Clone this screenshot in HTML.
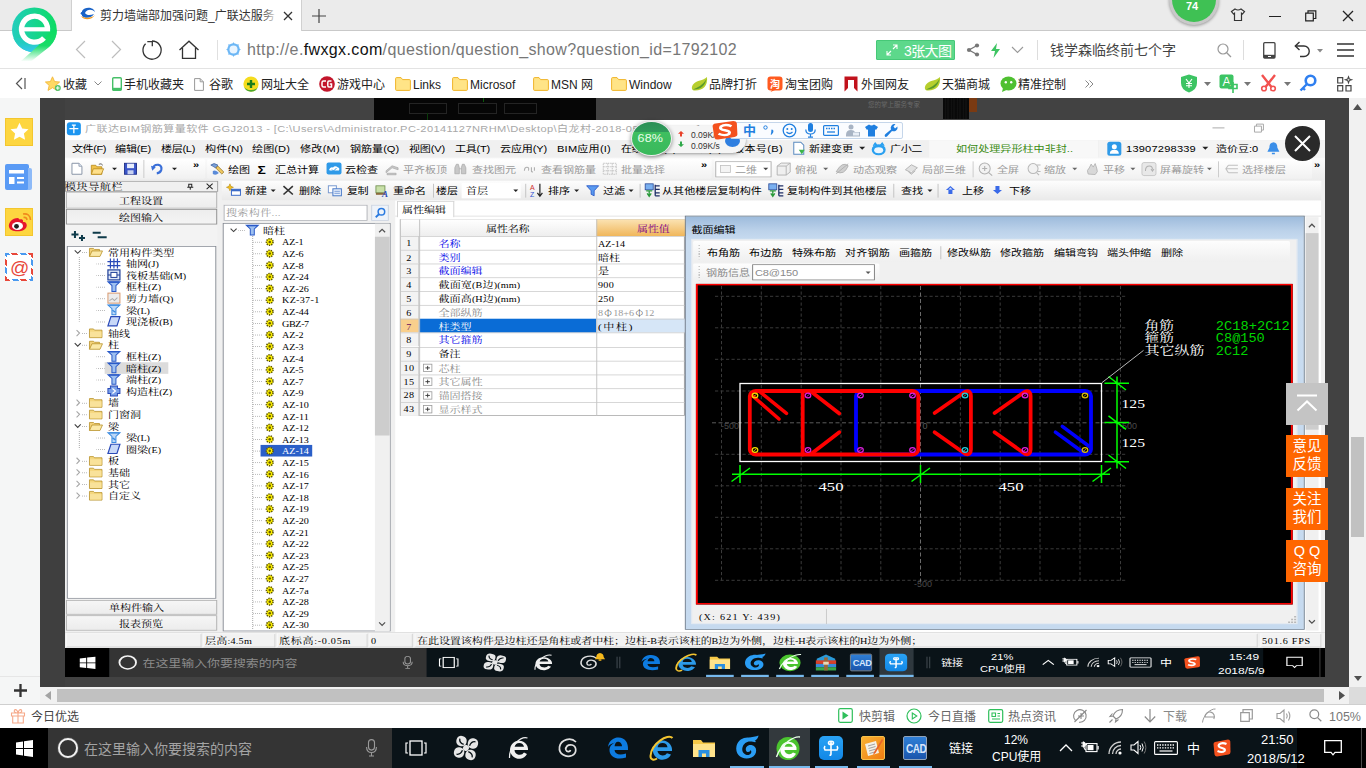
<!DOCTYPE html>
<html lang="zh-CN">
<head>
<meta charset="utf-8">
<title>剪力墙端部加强问题_广联达服务</title>
<style>
*{box-sizing:border-box;margin:0;padding:0}
html,body{width:1366px;height:768px;overflow:hidden;background:#fff}
body{position:relative;font-family:"Liberation Sans","Noto Sans CJK SC",sans-serif;font-size:12px;color:#222}
.a{position:absolute}
.t{position:absolute;white-space:nowrap;line-height:1;margin-top:1px}
svg{position:absolute;overflow:visible}
/* browser chrome */
#tabbar{left:0;top:0;width:1366px;height:31px;background:#ebebeb;border-bottom:1px solid #c9c9c9}
#tab{left:71px;top:0;width:231px;height:31px;background:#fff;border-left:1px solid #d0d0d0;border-right:1px solid #d0d0d0}
#nav{left:0;top:31px;width:1366px;height:38px;background:#fff;border-bottom:1px solid #e3e3e3}
#bm{left:0;top:69px;width:1366px;height:29px;background:#fff}
.bmt{font-size:13px;color:#222;top:77.500px}
/* page */
#side{left:0;top:98px;width:40px;height:606px;background:#f5f6f6}
#ov{left:40px;top:98px;width:1309px;height:589px;background:#424242}
#vsb{left:1349px;top:98px;width:17px;height:589px;background:#f1f1f1}
#hsb{left:40px;top:687px;width:1326px;height:17px;background:#f1f1f1}
#status{left:0;top:704px;width:1366px;height:24px;background:#fff;border-top:1px solid #cfcfcf}
#task{left:0;top:728px;width:1366px;height:40px;background:#0a1318}
#shot{left:65px;top:120px;width:1260px;height:557px;background:#f0f0f0;overflow:hidden;font-family:"Liberation Sans","Noto Sans CJK SC",sans-serif}
</style>
</head>
<body>
<!-- TABBAR -->
<div class="a" id="tabbar"></div>
<div class="a" id="tab"></div>
<div class="a" id="nav"></div>
<div class="a" id="bm"></div>
<!-- PAGE -->
<div class="a" id="side"></div>
<div class="a" id="ov"></div>
<div class="a" id="vsb"></div>
<div class="a" id="hsb"></div>
<div class="a" id="shot">
<div class="a" id="inner" style="left:0;top:0;width:1366px;height:768px;transform-origin:0 0;transform:scale(0.92240,0.72526);background:#f0f0f0">
<div class="a" style="left:0.0px;top:0.0px;width:1366.0px;height:27.6px;background:#fff"></div>
<svg style="left:2.2px;top:2.8px" width="15.2" height="17.9" viewBox="0 0 14 13" preserveAspectRatio="none"><rect x="0" y="0" width="14" height="13" rx="3" fill="#1c95f0"/><path d="M7 2.500 V11 M2.500 6.500 H11.500 M5 3 H9" stroke="#fff" stroke-width="1.300" fill="none"/></svg>
<div class="t" id="f1" style="left:21.7px;top:5.3px;font-size:12px;color:#a8a8a8;font-family:'Liberation Sans','Noto Sans CJK SC',sans-serif;letter-spacing:0.43px;">广联达BIM钢筋算量软件 GGJ2013 - [C:\Users\Administrator.PC-20141127NRHM\Desktop\白龙村-2018-05-09.GGJ12]</div>
<svg style="left:1243.5px;top:9.7px" width="13.0" height="1.7" viewBox="0 0 12 1.2" preserveAspectRatio="none"><rect width="12" height="1.200" fill="#bbb"/></svg>
<svg style="left:1289.0px;top:4.8px" width="10.8" height="11.0" viewBox="0 0 10 8" preserveAspectRatio="none"><path d="M.5 2.500 H7.500 V8.500 H.5Z M2.500 2.500 V.5 H9.500 V6.500 H7.500" fill="none" stroke="#aaa" stroke-width="1"/></svg>
<div class="a" style="left:0.0px;top:27.6px;width:1366.0px;height:24.8px;background:#f0f0f0"></div>
<div class="t" id="f2" style="left:7.6px;top:33.3px;font-size:12px;color:#000;font-family:'Liberation Sans','Noto Sans CJK SC',sans-serif;letter-spacing:-0.49px;">文件(F)</div>
<div class="t" id="f3" style="left:54.2px;top:33.3px;font-size:12px;color:#000;font-family:'Liberation Sans','Noto Sans CJK SC',sans-serif;letter-spacing:-0.19px;">编辑(E)</div>
<div class="t" id="f4" style="left:104.1px;top:33.3px;font-size:12px;color:#000;font-family:'Liberation Sans','Noto Sans CJK SC',sans-serif;letter-spacing:-0.36px;">楼层(L)</div>
<div class="t" id="f5" style="left:151.8px;top:33.3px;font-size:12px;color:#000;font-family:'Liberation Sans','Noto Sans CJK SC',sans-serif;letter-spacing:0.11px;">构件(N)</div>
<div class="t" id="f6" style="left:202.7px;top:33.3px;font-size:12px;color:#000;font-family:'Liberation Sans','Noto Sans CJK SC',sans-serif;letter-spacing:0.11px;">绘图(D)</div>
<div class="t" id="f7" style="left:254.8px;top:33.3px;font-size:12px;color:#000;font-family:'Liberation Sans','Noto Sans CJK SC',sans-serif;letter-spacing:0.27px;">修改(M)</div>
<div class="t" id="f8" style="left:309.0px;top:33.3px;font-size:12px;color:#000;font-family:'Liberation Sans','Noto Sans CJK SC',sans-serif;letter-spacing:-0.03px;">钢筋量(Q)</div>
<div class="t" id="f9" style="left:372.9px;top:33.3px;font-size:12px;color:#000;font-family:'Liberation Sans','Noto Sans CJK SC',sans-serif;letter-spacing:-0.19px;">视图(V)</div>
<div class="t" id="f10" style="left:422.8px;top:33.3px;font-size:12px;color:#000;font-family:'Liberation Sans','Noto Sans CJK SC',sans-serif;letter-spacing:-0.28px;">工具(T)</div>
<div class="t" id="f11" style="left:471.6px;top:33.3px;font-size:12px;color:#000;font-family:'Liberation Sans','Noto Sans CJK SC',sans-serif;letter-spacing:-0.17px;">云应用(Y)</div>
<div class="t" id="f12" style="left:533.4px;top:33.3px;font-size:12px;color:#000;font-family:'Liberation Sans','Noto Sans CJK SC',sans-serif;letter-spacing:0.23px;">BIM应用(I)</div>
<div class="t" id="f13" style="left:602.8px;top:33.3px;font-size:12px;color:#000;font-family:'Liberation Sans','Noto Sans CJK SC',sans-serif;letter-spacing:-0.62px;">在线服务(S)</div>
<div class="t" id="f14" style="left:673.2px;top:33.3px;font-size:12px;color:#000;font-family:'Liberation Sans','Noto Sans CJK SC',sans-serif;letter-spacing:-0.33px;">帮助(H)</div>
<div class="t" id="f15" style="left:724.2px;top:33.3px;font-size:12px;color:#000;font-family:'Liberation Sans','Noto Sans CJK SC',sans-serif;letter-spacing:0.37px;">版本号(B)</div>
<svg style="left:789.2px;top:30.3px" width="14.1" height="17.9" viewBox="0 0 13 13" preserveAspectRatio="none"><path d="M1 .5 H8 L11 3.500 V12.500 H1Z" fill="#fff" stroke="#5a8ac0" stroke-width="1"/><path d="M6 8 L12 8 L9 12.500Z" fill="#3bb54a"/></svg>
<div class="t" id="f16" style="left:806.6px;top:33.3px;font-size:12px;color:#000;font-family:'Liberation Sans','Noto Sans CJK SC',sans-serif;letter-spacing:-0.08px;">新建变更</div>
<svg style="left:860.8px;top:37.2px" width="6.5" height="4.1" viewBox="0 0 6 3" preserveAspectRatio="none"><path d="M0 0 H6 L3 3Z" fill="#222"/></svg>
<svg style="left:873.8px;top:29.6px" width="16.3" height="19.3" viewBox="0 0 15 14" preserveAspectRatio="none"><ellipse cx="7.500" cy="8" rx="7" ry="5.500" fill="#2aa0f0"/><path d="M2 4 L4 1 L6 3.500 M9 3.500 L11 1 L13 4" fill="#2aa0f0" stroke="#2aa0f0"/><ellipse cx="7.500" cy="8.500" rx="4.500" ry="3" fill="#eaf6ff"/></svg>
<div class="t" id="f17" style="left:894.4px;top:33.3px;font-size:12px;color:#000;font-family:'Liberation Sans','Noto Sans CJK SC',sans-serif;letter-spacing:-0.44px;">广小二</div>
<div class="a" style="left:936.7px;top:27.6px;width:183.2px;height:24.8px;background:#f8f8f8"></div>
<div class="t" id="f18" style="left:966.0px;top:33.3px;font-size:12px;color:#3a8a12;font-family:'Liberation Sans','Noto Sans CJK SC',sans-serif;letter-spacing:0.01px;">如何处理异形柱中非封..</div>
<div class="a" style="left:1121.0px;top:27.6px;width:245.0px;height:24.8px;background:#f4f4f4"></div>
<svg style="left:1129.7px;top:29.6px" width="15.2" height="19.3" viewBox="0 0 14 14" preserveAspectRatio="none"><rect width="14" height="14" rx="2.500" fill="#2f9ae8"/><circle cx="7" cy="5" r="2.500" fill="#fff"/><path d="M2.500 12 Q2.500 8 7 8 Q11.500 8 11.500 12Z" fill="#fff"/></svg>
<div class="t" id="f19" style="left:1150.3px;top:33.3px;font-size:12px;color:#000;font-family:'Liberation Sans','Noto Sans CJK SC',sans-serif;letter-spacing:0.22px;">13907298339</div>
<svg style="left:1232.7px;top:37.2px" width="6.5" height="4.1" viewBox="0 0 6 3" preserveAspectRatio="none"><path d="M0 0 H6 L3 3Z" fill="#222"/></svg>
<div class="t" id="f20" style="left:1247.8px;top:33.3px;font-size:12px;color:#000;font-family:'Liberation Sans','Noto Sans CJK SC',sans-serif;letter-spacing:-0.10px;">造价豆:0</div>
<svg style="left:1303.1px;top:30.3px" width="14.1" height="17.9" viewBox="0 0 13 13" preserveAspectRatio="none"><path d="M6.500 .5 Q10.500 1 10.500 6 L12.500 10 H.5 L2.500 6 Q2.500 1 6.500 .5Z M5 11 H8 V12.500 H5Z" fill="#3a8ee8"/></svg>
<div class="a" style="left:0.0px;top:52.4px;width:1366.0px;height:30.3px;background:linear-gradient(180deg,#fbfbfb,#ececec)"></div>
<div class="a" style="left:1.1px;top:53.8px;width:150.7px;height:27.6px;background:linear-gradient(180deg,#fff,#f1f1f1);border-radius:2px"></div>
<div class="a" style="left:153.9px;top:53.8px;width:547.5px;height:27.6px;background:linear-gradient(180deg,#fff,#f1f1f1);border-radius:2px"></div>
<div class="a" style="left:703.6px;top:53.8px;width:648.3px;height:27.6px;background:linear-gradient(180deg,#fff,#f1f1f1);border-radius:2px"></div>
<svg style="left:6.5px;top:59.3px" width="11.9" height="16.5" viewBox="0 0 11 12" preserveAspectRatio="none"><path d="M.5 .5 H7.500 L10.500 3.500 V11.500 H.5Z" fill="#fff" stroke="#8a96a8" stroke-width="1"/><path d="M7.500 .5 V3.500 H10.500" fill="#dde6f2" stroke="#8a96a8" stroke-width=".8"/></svg>
<svg style="left:28.2px;top:59.3px" width="14.1" height="16.5" viewBox="0 0 13 12" preserveAspectRatio="none"><path d="M.5 2.500 H5 L6 4 H11 V11.500 H.5Z" fill="#f0c24a" stroke="#b88a1c" stroke-width=".8"/><path d="M2.500 6 H12.800 L10.500 11.500 H.5Z" fill="#ffe08a" stroke="#b88a1c" stroke-width=".8"/><path d="M8 1.500 Q10.500 0 12 2.500" fill="none" stroke="#444" stroke-width=".8"/></svg>
<svg style="left:51.0px;top:66.2px" width="5.4" height="3.4" viewBox="0 0 5 2.5" preserveAspectRatio="none"><path d="M0 0 H5 L2.500 2.500Z" fill="#222"/></svg>
<svg style="left:64.0px;top:59.3px" width="14.1" height="16.5" viewBox="0 0 13 12" preserveAspectRatio="none"><rect x=".5" y=".5" width="12" height="11" fill="#3a55c8" stroke="#1f2f88" stroke-width=".9"/><rect x="3" y=".9" width="7" height="4.500" fill="#e8eefc"/><rect x="3.500" y="7.500" width="6" height="4" fill="#c8d2f0"/></svg>
<div class="a" style="left:84.6px;top:55.2px;width:1.1px;height:24.8px;background:#c9c9c9"></div>
<svg style="left:93.2px;top:59.3px" width="13.0" height="15.2" viewBox="0 0 12 11" preserveAspectRatio="none"><path d="M2 6 Q3 1.500 7.500 2 Q11.500 3 10.500 7 Q9.500 10 6 10.500" fill="none" stroke="#3a6fd8" stroke-width="2.200"/><path d="M.2 3 L5 4.500 L1.500 8Z" fill="#3a6fd8"/></svg>
<svg style="left:116.0px;top:66.2px" width="5.4" height="3.4" viewBox="0 0 5 2.5" preserveAspectRatio="none"><path d="M0 0 H5 L2.500 2.500Z" fill="#222"/></svg>
<div class="t" id="f21" style="left:138.8px;top:55.4px;font-size:12px;color:#000;font-family:'Liberation Sans','Noto Sans CJK SC',sans-serif;font-weight:bold;">»</div>
<svg style="left:157.2px;top:57.9px" width="16.3" height="19.3" viewBox="0 0 15 14" preserveAspectRatio="none"><path d="M1 3 Q4 0 8 3 L6 6 Q3 4 1 3Z" fill="#7aa0d8" stroke="#3a5a98" stroke-width=".7"/><path d="M6 6 L12 12 L14 10 L8 4Z" fill="#f0c860" stroke="#8a6a1c" stroke-width=".7"/><path d="M3 9 Q6 7 9 11 Q6 14 3 12Z" fill="#5a8ad8"/></svg>
<div class="t" id="f22" style="left:176.7px;top:61.6px;font-size:12px;color:#000;font-family:'Liberation Sans','Noto Sans CJK SC',sans-serif;letter-spacing:-0.08px;">绘图</div>
<div class="t" id="f23" style="left:208.7px;top:59.6px;font-size:15px;color:#000;font-family:'Liberation Sans','Noto Sans CJK SC',sans-serif;font-weight:bold;">Σ</div>
<div class="t" id="f24" style="left:227.7px;top:61.6px;font-size:12px;color:#000;font-family:'Liberation Sans','Noto Sans CJK SC',sans-serif;letter-spacing:-0.08px;">汇总计算</div>
<svg style="left:283.0px;top:57.9px" width="17.3" height="17.9" viewBox="0 0 16 13" preserveAspectRatio="none"><rect x=".5" y=".5" width="15" height="12" rx="2" fill="#2f9ae8"/><path d="M3 8 Q4 4.500 7 5.500 Q9 3 12 5.500 Q14 6 13 8.500 H4Z" fill="#fff"/><path d="M6 7.500 L7.500 9 L10.500 6" fill="none" stroke="#2f9ae8" stroke-width="1"/></svg>
<div class="t" id="f25" style="left:303.6px;top:61.6px;font-size:12px;color:#000;font-family:'Liberation Sans','Noto Sans CJK SC',sans-serif;letter-spacing:-0.08px;">云检查</div>
<svg style="left:346.9px;top:59.3px" width="15.2" height="16.5" viewBox="0 0 14 12" preserveAspectRatio="none"><path d="M1 8 L7 3 L13 5 V7 L7 5 L1 10Z M2 10.500 H11 V12 H2Z" fill="#c8c8c8" stroke="#a8a8a8" stroke-width=".7"/></svg>
<div class="t" id="f26" style="left:366.4px;top:61.6px;font-size:12px;color:#9a9a9a;font-family:'Liberation Sans','Noto Sans CJK SC',sans-serif;letter-spacing:-0.08px;">平齐板顶</div>
<svg style="left:420.6px;top:59.3px" width="15.2" height="16.5" viewBox="0 0 14 12" preserveAspectRatio="none"><path d="M1.500 11 V5 L3 1.500 H5 L6 5 V11Z M8 11 V5 L9 1.500 H11 L12.500 5 V11Z M6 6 H8" fill="#c8c8c8" stroke="#a8a8a8" stroke-width=".7"/></svg>
<div class="t" id="f27" style="left:441.2px;top:61.6px;font-size:12px;color:#9a9a9a;font-family:'Liberation Sans','Noto Sans CJK SC',sans-serif;letter-spacing:-0.08px;">查找图元</div>
<svg style="left:496.5px;top:63.4px" width="14.1" height="9.7" viewBox="0 0 13 7" preserveAspectRatio="none"><path d="M1 5 Q1 1.500 3.500 1.500 Q6 1.500 5 5 M8 1.500 V5.500 Q8 6.500 9.500 6 M11 1.500 V5" fill="none" stroke="#b0b0b0" stroke-width="1.100"/></svg>
<div class="t" id="f28" style="left:516.0px;top:61.6px;font-size:12px;color:#9a9a9a;font-family:'Liberation Sans','Noto Sans CJK SC',sans-serif;letter-spacing:-0.08px;">查看钢筋量</div>
<svg style="left:583.3px;top:59.3px" width="15.2" height="16.5" viewBox="0 0 14 12" preserveAspectRatio="none"><path d="M.5 .5 H13.500 V11.500 H.5Z M.5 4 H13.500 M.5 8 H13.500 M5 .5 V11.500 M9.500 .5 V11.500" fill="none" stroke="#b8b8b8" stroke-width=".8" stroke-dasharray="1.500 .8"/></svg>
<div class="t" id="f29" style="left:602.8px;top:61.6px;font-size:12px;color:#9a9a9a;font-family:'Liberation Sans','Noto Sans CJK SC',sans-serif;letter-spacing:-0.08px;">批量选择</div>
<div class="t" id="f30" style="left:689.5px;top:55.4px;font-size:12px;color:#000;font-family:'Liberation Sans','Noto Sans CJK SC',sans-serif;font-weight:bold;">»</div>
<div class="a" style="left:704.7px;top:56.5px;width:61.8px;height:22.1px;background:#fff;border:1px solid #ababab"></div>
<svg style="left:710.1px;top:62.0px" width="11.9" height="11.0" viewBox="0 0 11 8" preserveAspectRatio="none"><rect x=".5" y=".5" width="10" height="7" fill="#f4f4f4" stroke="#c0c0c0" stroke-width=".8"/></svg>
<div class="t" id="f31" style="left:726.4px;top:61.6px;font-size:12px;color:#9a9a9a;font-family:'Liberation Sans','Noto Sans CJK SC',sans-serif;letter-spacing:-0.08px;">二维</div>
<svg style="left:756.7px;top:66.2px" width="5.4" height="3.4" viewBox="0 0 5 2.5" preserveAspectRatio="none"><path d="M0 0 H5 L2.500 2.500Z" fill="#444"/></svg>
<svg style="left:770.8px;top:57.9px" width="16.3" height="19.3" viewBox="0 0 15 14" preserveAspectRatio="none"><path d="M1 4 L5 1 H14 V10 L10 13 H1Z M1 4 H10 V13 M10 4 L14 1" fill="#efefef" stroke="#b0b0b0" stroke-width=".9"/></svg>
<div class="t" id="f32" style="left:791.4px;top:61.6px;font-size:12px;color:#9a9a9a;font-family:'Liberation Sans','Noto Sans CJK SC',sans-serif;letter-spacing:-0.08px;">俯视</div>
<svg style="left:821.8px;top:66.2px" width="5.4" height="3.4" viewBox="0 0 5 2.5" preserveAspectRatio="none"><path d="M0 0 H5 L2.500 2.500Z" fill="#666"/></svg>
<svg style="left:834.8px;top:59.3px" width="15.2" height="16.5" viewBox="0 0 14 12" preserveAspectRatio="none"><path d="M1 9 Q7 -2 13 3 Q9 13 1 9Z M1 11 L13 1" fill="#d0d0d0" stroke="#aaa" stroke-width=".8"/></svg>
<div class="t" id="f33" style="left:854.3px;top:61.6px;font-size:12px;color:#9a9a9a;font-family:'Liberation Sans','Noto Sans CJK SC',sans-serif;letter-spacing:-0.08px;">动态观察</div>
<svg style="left:909.6px;top:59.3px" width="15.2" height="16.5" viewBox="0 0 14 12" preserveAspectRatio="none"><path d="M1 7 L7 2 L13 5 L7 10Z M4 9 L7 11.500 L11 8" fill="#e2e2e2" stroke="#aaa" stroke-width=".8"/></svg>
<div class="t" id="f34" style="left:929.1px;top:61.6px;font-size:12px;color:#9a9a9a;font-family:'Liberation Sans','Noto Sans CJK SC',sans-serif;letter-spacing:-0.08px;">局部三维</div>
<div class="a" style="left:984.4px;top:56.5px;width:1.1px;height:22.1px;background:#c9c9c9"></div>
<svg style="left:989.8px;top:57.9px" width="16.3" height="19.3" viewBox="0 0 15 14" preserveAspectRatio="none"><circle cx="6.500" cy="6.500" r="5.500" fill="#f2f2f2" stroke="#b0b0b0" stroke-width="1"/><path d="M4 6.500 H9 M6.500 4 V9 M10.500 10.500 L14 13.500" stroke="#b0b0b0" stroke-width="1.100"/></svg>
<div class="t" id="f35" style="left:1010.4px;top:61.6px;font-size:12px;color:#9a9a9a;font-family:'Liberation Sans','Noto Sans CJK SC',sans-serif;letter-spacing:-0.08px;">全屏</div>
<svg style="left:1042.9px;top:57.9px" width="15.2" height="19.3" viewBox="0 0 14 14" preserveAspectRatio="none"><circle cx="6" cy="6.500" r="5" fill="#f2f2f2" stroke="#b8b8b8" stroke-width="1"/><path d="M10 3 H13.500 M10.500 9.500 H13.500 M9.500 10.500 L12 13" stroke="#b8b8b8" stroke-width="1.100"/></svg>
<div class="t" id="f36" style="left:1061.4px;top:61.6px;font-size:12px;color:#9a9a9a;font-family:'Liberation Sans','Noto Sans CJK SC',sans-serif;letter-spacing:-0.08px;">缩放</div>
<svg style="left:1091.7px;top:66.2px" width="5.4" height="3.4" viewBox="0 0 5 2.5" preserveAspectRatio="none"><path d="M0 0 H5 L2.500 2.500Z" fill="#666"/></svg>
<svg style="left:1105.8px;top:57.9px" width="15.2" height="19.3" viewBox="0 0 14 14" preserveAspectRatio="none"><path d="M3 12 Q1 8 4 6 L6 2 L8 5 L10 1.500 L11.500 6 Q13.500 10 10 12.500Z" fill="#d8d8d8" stroke="#b0b0b0" stroke-width=".8"/></svg>
<div class="t" id="f37" style="left:1125.3px;top:61.6px;font-size:12px;color:#9a9a9a;font-family:'Liberation Sans','Noto Sans CJK SC',sans-serif;letter-spacing:-0.08px;">平移</div>
<svg style="left:1154.6px;top:66.2px" width="5.4" height="3.4" viewBox="0 0 5 2.5" preserveAspectRatio="none"><path d="M0 0 H5 L2.500 2.500Z" fill="#666"/></svg>
<svg style="left:1166.5px;top:57.9px" width="16.3" height="19.3" viewBox="0 0 15 14" preserveAspectRatio="none"><rect x=".5" y=".5" width="14" height="13" rx="2" fill="#e8e8e8" stroke="#c0c0c0" stroke-width=".8"/><path d="M4 9 Q4 4 8 4 Q11 4 11 7.500 M9.500 7 L11 9 L12.500 7" fill="none" stroke="#b0b0b0" stroke-width="1"/></svg>
<div class="t" id="f38" style="left:1187.1px;top:61.6px;font-size:12px;color:#9a9a9a;font-family:'Liberation Sans','Noto Sans CJK SC',sans-serif;letter-spacing:-0.08px;">屏幕旋转</div>
<svg style="left:1238.1px;top:66.2px" width="5.4" height="3.4" viewBox="0 0 5 2.5" preserveAspectRatio="none"><path d="M0 0 H5 L2.500 2.500Z" fill="#666"/></svg>
<div class="a" style="left:1250.0px;top:56.5px;width:1.1px;height:22.1px;background:#c9c9c9"></div>
<svg style="left:1257.6px;top:60.7px" width="14.1" height="13.8" viewBox="0 0 13 10" preserveAspectRatio="none"><path d="M3 1 H12.500 M1 4.500 H12.500 M3 8.500 H12.500 M3 1 L.5 4.500 L3 8.500" fill="none" stroke="#c0c0c0" stroke-width="1.100"/></svg>
<div class="t" id="f39" style="left:1276.0px;top:61.6px;font-size:12px;color:#9a9a9a;font-family:'Liberation Sans','Noto Sans CJK SC',sans-serif;letter-spacing:-0.08px;">选择楼层</div>
<div class="t" id="f40" style="left:1354.1px;top:55.4px;font-size:12px;color:#000;font-family:'Liberation Sans','Noto Sans CJK SC',sans-serif;font-weight:bold;">»</div>
<div class="a" style="left:0.0px;top:82.7px;width:1366.0px;height:28.3px;background:#f0f0f0"></div>
<div class="a" style="left:0.0px;top:84.1px;width:165.9px;height:14.5px;background:#f0f0f0;border:1px solid #9a9a9a"></div>
<div class="t" id="f41" style="left:0.0px;top:84.7px;font-size:12px;color:#000;font-family:'Liberation Serif','Noto Serif CJK SC',serif;letter-spacing:0.57px;">模块导航栏</div>
<svg style="left:132.3px;top:87.6px" width="7.6" height="8.3" viewBox="0 0 7 6" preserveAspectRatio="none"><path d="M2 0 V3.500 M5 0 V3.500 M2 .5 H5 M.5 3.500 H6.500 M3.500 3.500 V6" stroke="#222" stroke-width="1" fill="none"/></svg>
<svg style="left:152.9px;top:86.9px" width="7.6" height="9.0" viewBox="0 0 7 6.5" preserveAspectRatio="none"><path d="M.5 .5 L6.500 6 M6.500 .5 L.5 6" stroke="#222" stroke-width="1" fill="none"/></svg>
<div class="a" style="left:1.1px;top:99.3px;width:163.7px;height:22.8px;background:linear-gradient(180deg,#f6f6f6,#ececec);border:1px solid #adadad"></div>
<div class="t" id="f42" style="left:58.5px;top:105.0px;font-size:12px;color:#000;font-family:'Liberation Serif','Noto Serif CJK SC',serif;letter-spacing:-0.08px;">工程设置</div>
<div class="a" style="left:1.1px;top:122.7px;width:163.7px;height:21.4px;background:linear-gradient(180deg,#ededed,#f4f4f4);border:1px solid #8a8a8a"></div>
<div class="t" id="f43" style="left:58.5px;top:127.7px;font-size:12px;color:#000;font-family:'Liberation Serif','Noto Serif CJK SC',serif;letter-spacing:-0.08px;">绘图输入</div>
<div class="a" style="left:1.1px;top:144.8px;width:163.7px;height:29.0px;background:#f3f3f3"></div>
<svg style="left:6.5px;top:153.0px" width="16.3" height="13.8" viewBox="0 0 15 10" preserveAspectRatio="none"><path d="M3.500 0 V7 M0 3.500 H7 M10.500 4 V10 M7.500 7 H13.500" stroke="#0f3b4a" stroke-width="2" fill="none"/></svg>
<svg style="left:30.4px;top:154.4px" width="15.2" height="9.7" viewBox="0 0 14 7" preserveAspectRatio="none"><path d="M0 1 H8 M5 5.500 H14" stroke="#0f3b4a" stroke-width="2" fill="none"/></svg>
<div class="a" style="left:2.2px;top:173.7px;width:161.5px;height:486.7px;background:#fff;border:1px solid #828790"></div>
<div class="a" style="left:14.6px;top:188.9px;width:1.1px;height:88.9px;width:1px;background:repeating-linear-gradient(180deg,#a0a0a0 0 1px,transparent 1px 2.760px)"></div>
<div class="a" style="left:14.6px;top:317.1px;width:1.1px;height:56.5px;width:1px;background:repeating-linear-gradient(180deg,#a0a0a0 0 1px,transparent 1px 2.760px)"></div>
<div class="a" style="left:14.6px;top:428.8px;width:1.1px;height:24.8px;width:1px;background:repeating-linear-gradient(180deg,#a0a0a0 0 1px,transparent 1px 2.760px)"></div>
<svg style="left:10.3px;top:179.2px" width="7.6" height="5.5" viewBox="0 0 7 4" preserveAspectRatio="none"><path d="M.5 .5 L3.500 3.500 L6.500 .5" fill="none" stroke="#404040" stroke-width="1.100"/></svg>
<div class="a" style="left:18.4px;top:182.0px;width:6.5px;height:0.7px;height:1px;background:repeating-linear-gradient(90deg,#a0a0a0 0 1px,transparent 1px 2.170px)"></div>
<svg style="left:26.0px;top:175.1px" width="15.2" height="13.8" viewBox="0 0 14 10" preserveAspectRatio="none"><path d="M.5 9.500 V1.500 H4.500 L5.500 2.500 H10.500 V4" fill="#f3d27a" stroke="#b8922a" stroke-width=".8"/><path d="M.5 9.500 L3 4 H13.500 L11 9.500Z" fill="#fbe9a8" stroke="#b8922a" stroke-width=".8"/></svg>
<div class="t" id="f44" style="left:46.6px;top:176.0px;font-size:12px;color:#000;font-family:'Liberation Serif','Noto Serif CJK SC',serif;">常用构件类型</div>
<div class="a" style="left:34.1px;top:198.0px;width:10.3px;height:0.7px;height:1px;background:repeating-linear-gradient(90deg,#a0a0a0 0 1px,transparent 1px 2.170px)"></div>
<svg style="left:46.1px;top:191.1px" width="14.1" height="13.8" viewBox="0 0 13 10" preserveAspectRatio="none"><path d="M0 3 H13 M0 7 H13 M3 0 V10 M6.500 0 V10 M10 0 V10" stroke="#2a4ab8" stroke-width="1.200" fill="none"/></svg>
<div class="t" id="f45" style="left:66.1px;top:192.0px;font-size:12px;color:#000;font-family:'Liberation Serif','Noto Serif CJK SC',serif;">轴网<span style="font-size:11px">(J)</span></div>
<div class="a" style="left:34.1px;top:214.0px;width:10.3px;height:0.7px;height:1px;background:repeating-linear-gradient(90deg,#a0a0a0 0 1px,transparent 1px 2.170px)"></div>
<svg style="left:46.1px;top:206.4px" width="14.1" height="15.2" viewBox="0 0 13 11" preserveAspectRatio="none"><rect x=".5" y=".5" width="12" height="10" fill="#dfe8f8" stroke="#1f3f98" stroke-width="1.200"/><rect x="3.500" y="3" width="6" height="5" fill="#fff" stroke="#1f3f98" stroke-width="1"/><path d="M.5 5.500 H3.500 M9.500 5.500 H12.500" stroke="#1f3f98"/></svg>
<div class="t" id="f46" style="left:66.1px;top:208.0px;font-size:12px;color:#000;font-family:'Liberation Serif','Noto Serif CJK SC',serif;">筏板基础<span style="font-size:11px">(M)</span></div>
<div class="a" style="left:34.1px;top:230.0px;width:10.3px;height:0.7px;height:1px;background:repeating-linear-gradient(90deg,#a0a0a0 0 1px,transparent 1px 2.170px)"></div>
<svg style="left:46.1px;top:222.4px" width="14.1" height="15.2" viewBox="0 0 13 11" preserveAspectRatio="none"><path d="M.5 .8 H12.500 L8.500 4.500 V10.500 H4.500 V4.500Z" fill="#9ec0f0" stroke="#2a5ac8" stroke-width="1"/><path d="M1.500 1.200 H11.500" stroke="#2a5ac8" stroke-width="1.400"/></svg>
<div class="t" id="f47" style="left:66.1px;top:224.0px;font-size:12px;color:#000;font-family:'Liberation Serif','Noto Serif CJK SC',serif;">框柱<span style="font-size:11px">(Z)</span></div>
<div class="a" style="left:34.1px;top:246.0px;width:10.3px;height:0.7px;height:1px;background:repeating-linear-gradient(90deg,#a0a0a0 0 1px,transparent 1px 2.170px)"></div>
<svg style="left:46.1px;top:238.4px" width="14.1" height="15.2" viewBox="0 0 13 11" preserveAspectRatio="none"><rect x=".5" y=".5" width="12" height="10" fill="#ececec" stroke="#d89a70" stroke-width="1"/><path d="M2 8 L5 6 L7 8 L10 5" stroke="#aaa" fill="none"/></svg>
<div class="t" id="f48" style="left:66.1px;top:240.0px;font-size:12px;color:#000;font-family:'Liberation Serif','Noto Serif CJK SC',serif;">剪力墙<span style="font-size:11px">(Q)</span></div>
<div class="a" style="left:34.1px;top:262.0px;width:10.3px;height:0.7px;height:1px;background:repeating-linear-gradient(90deg,#a0a0a0 0 1px,transparent 1px 2.170px)"></div>
<svg style="left:46.1px;top:254.4px" width="14.1" height="15.2" viewBox="0 0 13 11" preserveAspectRatio="none"><path d="M.5 .8 H12.500 L8.500 4.500 V10.500 H4.500 V4.500Z" fill="#bcd8f8" stroke="#3a8ae0" stroke-width="1"/><path d="M2 1 H12 M5 6 L8 8" stroke="#3a8ae0" stroke-width="1.300"/></svg>
<div class="t" id="f49" style="left:66.1px;top:256.0px;font-size:12px;color:#000;font-family:'Liberation Serif','Noto Serif CJK SC',serif;">梁<span style="font-size:11px">(L)</span></div>
<div class="a" style="left:34.1px;top:278.0px;width:10.3px;height:0.7px;height:1px;background:repeating-linear-gradient(90deg,#a0a0a0 0 1px,transparent 1px 2.170px)"></div>
<svg style="left:46.1px;top:270.4px" width="14.1" height="15.2" viewBox="0 0 13 11" preserveAspectRatio="none"><path d="M3.500 .8 H12.500 L9.500 10 H.5Z" fill="#c8d8f8" stroke="#2a4ab8" stroke-width="1.200"/></svg>
<div class="t" id="f50" style="left:66.1px;top:272.0px;font-size:12px;color:#000;font-family:'Liberation Serif','Noto Serif CJK SC',serif;">现浇板<span style="font-size:11px">(B)</span></div>
<svg style="left:11.9px;top:289.2px" width="4.3" height="9.7" viewBox="0 0 4 7" preserveAspectRatio="none"><path d="M.5 .5 L3.500 3.500 L.5 6.500" fill="none" stroke="#a6a6a6" stroke-width="1.100"/></svg>
<div class="a" style="left:18.4px;top:294.0px;width:6.5px;height:0.7px;height:1px;background:repeating-linear-gradient(90deg,#a0a0a0 0 1px,transparent 1px 2.170px)"></div>
<svg style="left:26.0px;top:287.1px" width="15.2" height="13.8" viewBox="0 0 14 10" preserveAspectRatio="none"><path d="M.5 9.500 V.8 H4.500 L5.500 2 H13 V9.500Z" fill="#f5d77f" stroke="#b8922a" stroke-width=".8"/><path d="M1 3.500 H12.500 V9 H1Z" fill="#f9e29a"/></svg>
<div class="t" id="f51" style="left:46.6px;top:288.0px;font-size:12px;color:#000;font-family:'Liberation Serif','Noto Serif CJK SC',serif;">轴线</div>
<svg style="left:10.3px;top:307.3px" width="7.6" height="5.5" viewBox="0 0 7 4" preserveAspectRatio="none"><path d="M.5 .5 L3.500 3.500 L6.500 .5" fill="none" stroke="#404040" stroke-width="1.100"/></svg>
<div class="a" style="left:18.4px;top:310.0px;width:6.5px;height:0.7px;height:1px;background:repeating-linear-gradient(90deg,#a0a0a0 0 1px,transparent 1px 2.170px)"></div>
<svg style="left:26.0px;top:303.1px" width="15.2" height="13.8" viewBox="0 0 14 10" preserveAspectRatio="none"><path d="M.5 9.500 V1.500 H4.500 L5.500 2.500 H10.500 V4" fill="#f3d27a" stroke="#b8922a" stroke-width=".8"/><path d="M.5 9.500 L3 4 H13.500 L11 9.500Z" fill="#fbe9a8" stroke="#b8922a" stroke-width=".8"/></svg>
<div class="t" id="f52" style="left:46.6px;top:304.0px;font-size:12px;color:#000;font-family:'Liberation Serif','Noto Serif CJK SC',serif;">柱</div>
<div class="a" style="left:34.1px;top:326.0px;width:10.3px;height:0.7px;height:1px;background:repeating-linear-gradient(90deg,#a0a0a0 0 1px,transparent 1px 2.170px)"></div>
<svg style="left:46.1px;top:318.4px" width="14.1" height="15.2" viewBox="0 0 13 11" preserveAspectRatio="none"><path d="M.5 .8 H12.500 L8.500 4.500 V10.500 H4.500 V4.500Z" fill="#9ec0f0" stroke="#2a5ac8" stroke-width="1"/><path d="M1.500 1.200 H11.500" stroke="#2a5ac8" stroke-width="1.400"/></svg>
<div class="t" id="f53" style="left:66.1px;top:320.0px;font-size:12px;color:#000;font-family:'Liberation Serif','Noto Serif CJK SC',serif;">框柱<span style="font-size:11px">(Z)</span></div>
<div class="a" style="left:34.1px;top:342.0px;width:10.3px;height:0.7px;height:1px;background:repeating-linear-gradient(90deg,#a0a0a0 0 1px,transparent 1px 2.170px)"></div>
<div class="a" style="left:42.8px;top:333.7px;width:68.8px;height:16.5px;background:#dcdcdc"></div>
<svg style="left:46.1px;top:334.4px" width="14.1" height="15.2" viewBox="0 0 13 11" preserveAspectRatio="none"><path d="M.5 .8 H12.500 L8.500 4.500 V10.500 H4.500 V4.500Z" fill="#9ec0f0" stroke="#2a5ac8" stroke-width="1"/><path d="M1.500 1.200 H11.500" stroke="#2a5ac8" stroke-width="1.400"/></svg>
<div class="t" id="f54" style="left:66.1px;top:336.0px;font-size:12px;color:#000;font-family:'Liberation Serif','Noto Serif CJK SC',serif;">暗柱<span style="font-size:11px">(Z)</span></div>
<div class="a" style="left:34.1px;top:358.0px;width:10.3px;height:0.7px;height:1px;background:repeating-linear-gradient(90deg,#a0a0a0 0 1px,transparent 1px 2.170px)"></div>
<svg style="left:46.1px;top:350.4px" width="14.1" height="15.2" viewBox="0 0 13 11" preserveAspectRatio="none"><path d="M.5 .8 H12.500 L8.500 4.500 V10.500 H4.500 V4.500Z" fill="#9ec0f0" stroke="#2a5ac8" stroke-width="1"/><path d="M1.500 1.200 H11.500" stroke="#2a5ac8" stroke-width="1.400"/></svg>
<div class="t" id="f55" style="left:66.1px;top:352.0px;font-size:12px;color:#000;font-family:'Liberation Serif','Noto Serif CJK SC',serif;">端柱<span style="font-size:11px">(Z)</span></div>
<div class="a" style="left:34.1px;top:374.0px;width:10.3px;height:0.7px;height:1px;background:repeating-linear-gradient(90deg,#a0a0a0 0 1px,transparent 1px 2.170px)"></div>
<svg style="left:46.1px;top:366.4px" width="14.1" height="15.2" viewBox="0 0 13 11" preserveAspectRatio="none"><path d="M3 .5 H10 V3 H12.500 V8 H10 V10.500 H3 V8 H.5 V3 H3Z" fill="#7aa0e8" stroke="#2a4ab8" stroke-width="1"/><path d="M5 3 L8 5.500 L5 8" fill="none" stroke="#fff" stroke-width="1.200"/></svg>
<div class="t" id="f56" style="left:66.1px;top:368.0px;font-size:12px;color:#000;font-family:'Liberation Serif','Noto Serif CJK SC',serif;">构造柱<span style="font-size:11px">(Z)</span></div>
<svg style="left:11.9px;top:385.2px" width="4.3" height="9.7" viewBox="0 0 4 7" preserveAspectRatio="none"><path d="M.5 .5 L3.500 3.500 L.5 6.500" fill="none" stroke="#a6a6a6" stroke-width="1.100"/></svg>
<div class="a" style="left:18.4px;top:390.0px;width:6.5px;height:0.7px;height:1px;background:repeating-linear-gradient(90deg,#a0a0a0 0 1px,transparent 1px 2.170px)"></div>
<svg style="left:26.0px;top:383.1px" width="15.2" height="13.8" viewBox="0 0 14 10" preserveAspectRatio="none"><path d="M.5 9.500 V.8 H4.500 L5.500 2 H13 V9.500Z" fill="#f5d77f" stroke="#b8922a" stroke-width=".8"/><path d="M1 3.500 H12.500 V9 H1Z" fill="#f9e29a"/></svg>
<div class="t" id="f57" style="left:46.6px;top:384.0px;font-size:12px;color:#000;font-family:'Liberation Serif','Noto Serif CJK SC',serif;">墙</div>
<svg style="left:11.9px;top:401.2px" width="4.3" height="9.7" viewBox="0 0 4 7" preserveAspectRatio="none"><path d="M.5 .5 L3.500 3.500 L.5 6.500" fill="none" stroke="#a6a6a6" stroke-width="1.100"/></svg>
<div class="a" style="left:18.4px;top:406.0px;width:6.5px;height:0.7px;height:1px;background:repeating-linear-gradient(90deg,#a0a0a0 0 1px,transparent 1px 2.170px)"></div>
<svg style="left:26.0px;top:399.1px" width="15.2" height="13.8" viewBox="0 0 14 10" preserveAspectRatio="none"><path d="M.5 9.500 V.8 H4.500 L5.500 2 H13 V9.500Z" fill="#f5d77f" stroke="#b8922a" stroke-width=".8"/><path d="M1 3.500 H12.500 V9 H1Z" fill="#f9e29a"/></svg>
<div class="t" id="f58" style="left:46.6px;top:400.0px;font-size:12px;color:#000;font-family:'Liberation Serif','Noto Serif CJK SC',serif;">门窗洞</div>
<svg style="left:10.3px;top:419.3px" width="7.6" height="5.5" viewBox="0 0 7 4" preserveAspectRatio="none"><path d="M.5 .5 L3.500 3.500 L6.500 .5" fill="none" stroke="#404040" stroke-width="1.100"/></svg>
<div class="a" style="left:18.4px;top:422.0px;width:6.5px;height:0.7px;height:1px;background:repeating-linear-gradient(90deg,#a0a0a0 0 1px,transparent 1px 2.170px)"></div>
<svg style="left:26.0px;top:415.1px" width="15.2" height="13.8" viewBox="0 0 14 10" preserveAspectRatio="none"><path d="M.5 9.500 V1.500 H4.500 L5.500 2.500 H10.500 V4" fill="#f3d27a" stroke="#b8922a" stroke-width=".8"/><path d="M.5 9.500 L3 4 H13.500 L11 9.500Z" fill="#fbe9a8" stroke="#b8922a" stroke-width=".8"/></svg>
<div class="t" id="f59" style="left:46.6px;top:416.0px;font-size:12px;color:#000;font-family:'Liberation Serif','Noto Serif CJK SC',serif;">梁</div>
<div class="a" style="left:34.1px;top:438.0px;width:10.3px;height:0.7px;height:1px;background:repeating-linear-gradient(90deg,#a0a0a0 0 1px,transparent 1px 2.170px)"></div>
<svg style="left:46.1px;top:430.4px" width="14.1" height="15.2" viewBox="0 0 13 11" preserveAspectRatio="none"><path d="M.5 .8 H12.500 L8.500 4.500 V10.500 H4.500 V4.500Z" fill="#bcd8f8" stroke="#3a8ae0" stroke-width="1"/><path d="M2 1 H12 M5 6 L8 8" stroke="#3a8ae0" stroke-width="1.300"/></svg>
<div class="t" id="f60" style="left:66.1px;top:432.0px;font-size:12px;color:#000;font-family:'Liberation Serif','Noto Serif CJK SC',serif;">梁<span style="font-size:11px">(L)</span></div>
<div class="a" style="left:34.1px;top:454.0px;width:10.3px;height:0.7px;height:1px;background:repeating-linear-gradient(90deg,#a0a0a0 0 1px,transparent 1px 2.170px)"></div>
<svg style="left:46.1px;top:446.4px" width="14.1" height="15.2" viewBox="0 0 13 11" preserveAspectRatio="none"><path d="M3.500 .8 H12.500 L9.500 10 H.5Z" fill="#c8d8f8" stroke="#2a4ab8" stroke-width="1.200"/></svg>
<div class="t" id="f61" style="left:66.1px;top:448.0px;font-size:12px;color:#000;font-family:'Liberation Serif','Noto Serif CJK SC',serif;">圈梁<span style="font-size:11px">(E)</span></div>
<svg style="left:11.9px;top:465.2px" width="4.3" height="9.7" viewBox="0 0 4 7" preserveAspectRatio="none"><path d="M.5 .5 L3.500 3.500 L.5 6.500" fill="none" stroke="#a6a6a6" stroke-width="1.100"/></svg>
<div class="a" style="left:18.4px;top:470.0px;width:6.5px;height:0.7px;height:1px;background:repeating-linear-gradient(90deg,#a0a0a0 0 1px,transparent 1px 2.170px)"></div>
<svg style="left:26.0px;top:463.1px" width="15.2" height="13.8" viewBox="0 0 14 10" preserveAspectRatio="none"><path d="M.5 9.500 V.8 H4.500 L5.500 2 H13 V9.500Z" fill="#f5d77f" stroke="#b8922a" stroke-width=".8"/><path d="M1 3.500 H12.500 V9 H1Z" fill="#f9e29a"/></svg>
<div class="t" id="f62" style="left:46.6px;top:464.0px;font-size:12px;color:#000;font-family:'Liberation Serif','Noto Serif CJK SC',serif;">板</div>
<svg style="left:11.9px;top:481.2px" width="4.3" height="9.7" viewBox="0 0 4 7" preserveAspectRatio="none"><path d="M.5 .5 L3.500 3.500 L.5 6.500" fill="none" stroke="#a6a6a6" stroke-width="1.100"/></svg>
<div class="a" style="left:18.4px;top:486.0px;width:6.5px;height:0.7px;height:1px;background:repeating-linear-gradient(90deg,#a0a0a0 0 1px,transparent 1px 2.170px)"></div>
<svg style="left:26.0px;top:479.1px" width="15.2" height="13.8" viewBox="0 0 14 10" preserveAspectRatio="none"><path d="M.5 9.500 V.8 H4.500 L5.500 2 H13 V9.500Z" fill="#f5d77f" stroke="#b8922a" stroke-width=".8"/><path d="M1 3.500 H12.500 V9 H1Z" fill="#f9e29a"/></svg>
<div class="t" id="f63" style="left:46.6px;top:480.0px;font-size:12px;color:#000;font-family:'Liberation Serif','Noto Serif CJK SC',serif;">基础</div>
<svg style="left:11.9px;top:497.2px" width="4.3" height="9.7" viewBox="0 0 4 7" preserveAspectRatio="none"><path d="M.5 .5 L3.500 3.500 L.5 6.500" fill="none" stroke="#a6a6a6" stroke-width="1.100"/></svg>
<div class="a" style="left:18.4px;top:502.0px;width:6.5px;height:0.7px;height:1px;background:repeating-linear-gradient(90deg,#a0a0a0 0 1px,transparent 1px 2.170px)"></div>
<svg style="left:26.0px;top:495.1px" width="15.2" height="13.8" viewBox="0 0 14 10" preserveAspectRatio="none"><path d="M.5 9.500 V.8 H4.500 L5.500 2 H13 V9.500Z" fill="#f5d77f" stroke="#b8922a" stroke-width=".8"/><path d="M1 3.500 H12.500 V9 H1Z" fill="#f9e29a"/></svg>
<div class="t" id="f64" style="left:46.6px;top:496.0px;font-size:12px;color:#000;font-family:'Liberation Serif','Noto Serif CJK SC',serif;">其它</div>
<svg style="left:11.9px;top:513.2px" width="4.3" height="9.7" viewBox="0 0 4 7" preserveAspectRatio="none"><path d="M.5 .5 L3.500 3.500 L.5 6.500" fill="none" stroke="#a6a6a6" stroke-width="1.100"/></svg>
<div class="a" style="left:18.4px;top:518.0px;width:6.5px;height:0.7px;height:1px;background:repeating-linear-gradient(90deg,#a0a0a0 0 1px,transparent 1px 2.170px)"></div>
<svg style="left:26.0px;top:511.1px" width="15.2" height="13.8" viewBox="0 0 14 10" preserveAspectRatio="none"><path d="M.5 9.500 V.8 H4.500 L5.500 2 H13 V9.500Z" fill="#f5d77f" stroke="#b8922a" stroke-width=".8"/><path d="M1 3.500 H12.500 V9 H1Z" fill="#f9e29a"/></svg>
<div class="t" id="f65" style="left:46.6px;top:512.0px;font-size:12px;color:#000;font-family:'Liberation Serif','Noto Serif CJK SC',serif;">自定义</div>
<div class="a" style="left:1.1px;top:661.8px;width:163.7px;height:20.0px;background:linear-gradient(180deg,#f6f6f6,#ececec);border:1px solid #adadad"></div>
<div class="t" id="f66" style="left:47.7px;top:666.2px;font-size:12px;color:#000;font-family:'Liberation Serif','Noto Serif CJK SC',serif;letter-spacing:-0.08px;">单构件输入</div>
<div class="a" style="left:1.1px;top:683.2px;width:163.7px;height:20.7px;background:linear-gradient(180deg,#f6f6f6,#ececec);border:1px solid #adadad"></div>
<div class="t" id="f67" style="left:58.5px;top:687.5px;font-size:12px;color:#000;font-family:'Liberation Serif','Noto Serif CJK SC',serif;letter-spacing:-0.08px;">报表预览</div>
<div class="a" style="left:170.2px;top:84.1px;width:1191.5px;height:26.9px;background:linear-gradient(180deg,#fdfdfd,#e9e9e9)"></div>
<svg style="left:174.5px;top:88.2px" width="16.3" height="16.5" viewBox="0 0 15 12" preserveAspectRatio="none"><rect x="5" y="5.500" width="9" height="6" fill="#fff" stroke="#3a6ac8" stroke-width="1"/><rect x="5" y="5.500" width="9" height="2" fill="#3a6ac8"/><path d="M3.500 0 L4.500 2.500 L7 3.500 L4.500 4.500 L3.500 7 L2.500 4.500 L0 3.500 L2.500 2.500Z" fill="#f4c020" stroke="#a87a00" stroke-width=".5"/></svg>
<div class="t" id="f68" style="left:195.1px;top:91.2px;font-size:12px;color:#000;font-family:'Liberation Sans','Noto Sans CJK SC',sans-serif;letter-spacing:-0.08px;">新建</div>
<svg style="left:223.3px;top:95.8px" width="5.4" height="3.4" viewBox="0 0 5 2.5" preserveAspectRatio="none"><path d="M0 0 H5 L2.500 2.500Z" fill="#222"/></svg>
<svg style="left:236.3px;top:89.6px" width="11.9" height="13.8" viewBox="0 0 11 10" preserveAspectRatio="none"><path d="M.8 .8 L10.200 9.200 M10.200 .8 L.8 9.200" stroke="#333" stroke-width="1.600" fill="none"/></svg>
<div class="t" id="f69" style="left:253.7px;top:91.2px;font-size:12px;color:#000;font-family:'Liberation Sans','Noto Sans CJK SC',sans-serif;letter-spacing:-0.08px;">删除</div>
<svg style="left:285.1px;top:89.6px" width="15.2" height="15.2" viewBox="0 0 14 11" preserveAspectRatio="none"><rect x=".5" y=".5" width="8" height="7" fill="#fff" stroke="#7a9ad0" stroke-width="1"/><rect x="5" y="3.500" width="8.500" height="7" fill="#e8f0fc" stroke="#4a7ac8" stroke-width="1"/><path d="M6.500 6 H12 M6.500 8 H12" stroke="#4a7ac8" stroke-width=".7"/></svg>
<div class="t" id="f70" style="left:305.7px;top:91.2px;font-size:12px;color:#000;font-family:'Liberation Sans','Noto Sans CJK SC',sans-serif;letter-spacing:-0.62px;">复制</div>
<svg style="left:336.1px;top:88.2px" width="15.2" height="17.9" viewBox="0 0 14 13" preserveAspectRatio="none"><rect x="1" y="2" width="9" height="7" fill="#c8e0a8" stroke="#6a8a4a" stroke-width=".8"/><path d="M1 9 H10 V11 H1Z" fill="#8a6a3a"/><text x="7" y="13" font-size="9" font-weight="bold" font-style="italic" fill="#2a4ab8" font-family="Liberation Serif,serif">A</text></svg>
<div class="t" id="f71" style="left:355.6px;top:91.2px;font-size:12px;color:#000;font-family:'Liberation Sans','Noto Sans CJK SC',sans-serif;letter-spacing:-0.08px;">重命名</div>
<div class="a" style="left:399.0px;top:88.2px;width:1.1px;height:19.3px;background:#c0c0c0"></div>
<div class="t" id="f72" style="left:402.2px;top:91.2px;font-size:12px;color:#000;font-family:'Liberation Sans','Noto Sans CJK SC',sans-serif;letter-spacing:-0.08px;">楼层</div>
<div class="a" style="left:430.4px;top:86.9px;width:64.0px;height:21.4px;background:#fff"></div>
<div class="t" id="f73" style="left:434.7px;top:91.2px;font-size:12px;color:#000;font-family:'Liberation Serif','Noto Serif CJK SC',serif;letter-spacing:-0.08px;">首层</div>
<svg style="left:485.7px;top:95.8px" width="5.4" height="3.4" viewBox="0 0 5 2.5" preserveAspectRatio="none"><path d="M0 0 H5 L2.500 2.500Z" fill="#222"/></svg>
<div class="a" style="left:498.7px;top:88.2px;width:1.1px;height:19.3px;background:#c0c0c0"></div>
<svg style="left:504.1px;top:88.2px" width="15.2" height="17.9" viewBox="0 0 14 13" preserveAspectRatio="none"><text x="0" y="6" font-size="7" fill="#d03030" font-family="Liberation Sans,sans-serif">A</text><text x="0" y="13" font-size="7" fill="#3050d0" font-family="Liberation Sans,sans-serif">Z</text><path d="M10 0 V12 M7.500 9 L10 12.500 L12.500 9" stroke="#222" stroke-width="1.200" fill="none"/></svg>
<div class="t" id="f74" style="left:523.6px;top:91.2px;font-size:12px;color:#000;font-family:'Liberation Sans','Noto Sans CJK SC',sans-serif;letter-spacing:-0.08px;">排序</div>
<svg style="left:551.8px;top:95.8px" width="5.4" height="3.4" viewBox="0 0 5 2.5" preserveAspectRatio="none"><path d="M0 0 H5 L2.500 2.500Z" fill="#222"/></svg>
<svg style="left:564.8px;top:89.6px" width="14.1" height="15.2" viewBox="0 0 13 11" preserveAspectRatio="none"><path d="M.5 .5 H12.500 L8 5.500 V10.500 L5 9 V5.500Z" fill="#5a9af0" stroke="#2a5ac8" stroke-width=".9"/></svg>
<div class="t" id="f75" style="left:583.3px;top:91.2px;font-size:12px;color:#000;font-family:'Liberation Sans','Noto Sans CJK SC',sans-serif;letter-spacing:-0.08px;">过滤</div>
<svg style="left:611.4px;top:95.8px" width="5.4" height="3.4" viewBox="0 0 5 2.5" preserveAspectRatio="none"><path d="M0 0 H5 L2.500 2.500Z" fill="#222"/></svg>
<div class="a" style="left:623.4px;top:88.2px;width:1.1px;height:19.3px;background:#c0c0c0"></div>
<svg style="left:628.8px;top:88.2px" width="16.3" height="17.9" viewBox="0 0 15 13" preserveAspectRatio="none"><rect x="0" y="0" width="8" height="6" fill="#7ab0f0" stroke="#2a4a98" stroke-width=".8"/><path d="M1 7 H7 M4 7 V12 M2 9.500 L4 12.500 L6 9.500" stroke="#2a9a3a" stroke-width="1.300" fill="none"/><path d="M10 1 V12 M10 2 H14.500 M10 5.500 H14.500 M10 9 H14.500 M10 12 H14.500" stroke="#1f2f68" stroke-width="1.300" fill="none"/></svg>
<div class="t" id="f76" style="left:647.2px;top:91.2px;font-size:12px;color:#000;font-family:'Liberation Sans','Noto Sans CJK SC',sans-serif;letter-spacing:0.04px;">从其他楼层复制构件</div>
<svg style="left:763.2px;top:88.2px" width="16.3" height="17.9" viewBox="0 0 15 13" preserveAspectRatio="none"><rect x="0" y="0" width="8" height="6" fill="#7ab0f0" stroke="#2a4a98" stroke-width=".8"/><path d="M1 7 H7 M4 7 V12 M2 9.500 L4 12.500 L6 9.500" stroke="#2a9a3a" stroke-width="1.300" fill="none"/><path d="M10 1 V12 M10 2 H14.500 M10 5.500 H14.500 M10 9 H14.500 M10 12 H14.500" stroke="#1f2f68" stroke-width="1.300" fill="none"/></svg>
<div class="t" id="f77" style="left:782.7px;top:91.2px;font-size:12px;color:#000;font-family:'Liberation Sans','Noto Sans CJK SC',sans-serif;letter-spacing:0.04px;">复制构件到其他楼层</div>
<div class="a" style="left:897.7px;top:88.2px;width:1.1px;height:19.3px;background:#c0c0c0"></div>
<div class="t" id="f78" style="left:906.3px;top:91.2px;font-size:12px;color:#000;font-family:'Liberation Sans','Noto Sans CJK SC',sans-serif;letter-spacing:-0.08px;">查找</div>
<svg style="left:934.5px;top:95.8px" width="5.4" height="3.4" viewBox="0 0 5 2.5" preserveAspectRatio="none"><path d="M0 0 H5 L2.500 2.500Z" fill="#222"/></svg>
<div class="a" style="left:946.4px;top:88.2px;width:1.1px;height:19.3px;background:#c0c0c0"></div>
<svg style="left:955.1px;top:91.0px" width="9.8" height="11.0" viewBox="0 0 9 8" preserveAspectRatio="none"><path d="M4.500 0 L9 4 H6.500 V8 H2.500 V4 H0Z" fill="#3a6ae8"/><path d="M4.500 1.500 L6.500 3.500 H2.500Z" fill="#cfe0ff"/></svg>
<div class="t" id="f79" style="left:972.5px;top:91.2px;font-size:12px;color:#000;font-family:'Liberation Sans','Noto Sans CJK SC',sans-serif;letter-spacing:-0.08px;">上移</div>
<svg style="left:1006.1px;top:91.0px" width="9.8" height="11.0" viewBox="0 0 9 8" preserveAspectRatio="none"><path d="M4.500 8 L9 4 H6.500 V0 H2.500 V4 H0Z" fill="#3a6ae8"/></svg>
<div class="t" id="f80" style="left:1023.4px;top:91.2px;font-size:12px;color:#000;font-family:'Liberation Sans','Noto Sans CJK SC',sans-serif;letter-spacing:-0.08px;">下移</div>
<div class="a" style="left:165.9px;top:111.0px;width:191.9px;height:595.0px;background:#f0f0f0"></div>
<div class="a" style="left:172.4px;top:117.2px;width:156.1px;height:21.4px;background:#fff;border:1px solid #abadb3"></div>
<div class="t" id="f81" style="left:174.5px;top:122.2px;font-size:12px;color:#9a9a9a;font-family:'Liberation Serif','Noto Serif CJK SC',serif;letter-spacing:0.37px;">搜索构件...</div>
<div class="a" style="left:331.7px;top:117.2px;width:19.5px;height:21.4px;background:#eef3fa;border:1px solid #c8d0dc"></div>
<svg style="left:336.1px;top:121.3px" width="11.9" height="13.8" viewBox="0 0 11 10" preserveAspectRatio="none"><circle cx="6.500" cy="4" r="3.300" fill="none" stroke="#2a7ae0" stroke-width="1.500"/><path d="M4 6.500 L.8 9.500" stroke="#2a7ae0" stroke-width="1.800"/></svg>
<div class="a" style="left:171.3px;top:142.0px;width:181.6px;height:563.2px;background:#fff;border:1px solid #828790"></div>
<div class="a" style="left:336.1px;top:143.4px;width:15.7px;height:561.2px;background:#f0f0f0"></div>
<div class="a" style="left:336.1px;top:161.3px;width:15.7px;height:273.7px;background:#cdcdcd"></div>
<svg style="left:340.4px;top:150.3px" width="7.6" height="5.5" viewBox="0 0 7 4" preserveAspectRatio="none"><path d="M.5 3.500 L3.500 .5 L6.500 3.500" fill="none" stroke="#505050" stroke-width="1.200"/></svg>
<svg style="left:340.4px;top:692.2px" width="7.6" height="5.5" viewBox="0 0 7 4" preserveAspectRatio="none"><path d="M.5 .5 L3.500 3.500 L6.500 .5" fill="none" stroke="#505050" stroke-width="1.200"/></svg>
<svg style="left:179.4px;top:148.9px" width="7.6" height="5.5" viewBox="0 0 7 4" preserveAspectRatio="none"><path d="M.5 .5 L3.500 3.500 L6.500 .5" fill="none" stroke="#404040" stroke-width="1.100"/></svg>
<div class="a" style="left:187.6px;top:151.7px;width:7.6px;height:0.7px;height:1px;background:repeating-linear-gradient(90deg,#a0a0a0 0 1px,transparent 1px 2.170px)"></div>
<svg style="left:196.2px;top:144.1px" width="14.1" height="15.2" viewBox="0 0 13 11" preserveAspectRatio="none"><path d="M.5 .8 H12.500 L8.500 4.500 V10.500 H4.500 V4.500Z" fill="#9ec0f0" stroke="#2a5ac8" stroke-width="1"/><path d="M1.500 1.200 H11.500" stroke="#2a5ac8" stroke-width="1.400"/></svg>
<div class="t" id="f82" style="left:214.7px;top:145.7px;font-size:12px;color:#000;font-family:'Liberation Serif','Noto Serif CJK SC',serif;letter-spacing:-0.08px;">暗柱</div>
<div class="a" style="left:202.7px;top:159.9px;width:1.1px;height:543.3px;width:1px;background:repeating-linear-gradient(180deg,#a0a0a0 0 1px,transparent 1px 2.760px)"></div>
<div class="a" style="left:203.8px;top:167.7px;width:9.8px;height:0.7px;height:1px;background:repeating-linear-gradient(90deg,#a0a0a0 0 1px,transparent 1px 2.170px)"></div>
<svg style="left:215.7px;top:161.5px" width="11.9" height="12.4" viewBox="0 0 11 9" preserveAspectRatio="none"><circle cx="5.500" cy="4.500" r="3.300" fill="#fff200" stroke="#5a5200" stroke-width="1.600" stroke-dasharray="1.300 1"/><circle cx="5.500" cy="4.500" r="1.300" fill="#6a6000"/></svg>
<div class="t" id="f83" style="left:235.3px;top:161.7px;font-size:12px;color:#000;font-family:'Liberation Serif','Noto Serif CJK SC',serif;letter-spacing:-0.16px;"><span style="font-size:11px">AZ-1</span></div>
<div class="a" style="left:203.8px;top:183.7px;width:9.8px;height:0.7px;height:1px;background:repeating-linear-gradient(90deg,#a0a0a0 0 1px,transparent 1px 2.170px)"></div>
<svg style="left:215.7px;top:177.5px" width="11.9" height="12.4" viewBox="0 0 11 9" preserveAspectRatio="none"><circle cx="5.500" cy="4.500" r="3.300" fill="#fff200" stroke="#5a5200" stroke-width="1.600" stroke-dasharray="1.300 1"/><circle cx="5.500" cy="4.500" r="1.300" fill="#6a6000"/></svg>
<div class="t" id="f84" style="left:235.3px;top:177.7px;font-size:12px;color:#000;font-family:'Liberation Serif','Noto Serif CJK SC',serif;letter-spacing:-0.16px;"><span style="font-size:11px">AZ-6</span></div>
<div class="a" style="left:203.8px;top:199.7px;width:9.8px;height:0.7px;height:1px;background:repeating-linear-gradient(90deg,#a0a0a0 0 1px,transparent 1px 2.170px)"></div>
<svg style="left:215.7px;top:193.5px" width="11.9" height="12.4" viewBox="0 0 11 9" preserveAspectRatio="none"><circle cx="5.500" cy="4.500" r="3.300" fill="#fff200" stroke="#5a5200" stroke-width="1.600" stroke-dasharray="1.300 1"/><circle cx="5.500" cy="4.500" r="1.300" fill="#6a6000"/></svg>
<div class="t" id="f85" style="left:235.3px;top:193.7px;font-size:12px;color:#000;font-family:'Liberation Serif','Noto Serif CJK SC',serif;letter-spacing:-0.16px;"><span style="font-size:11px">AZ-8</span></div>
<div class="a" style="left:203.8px;top:215.7px;width:9.8px;height:0.7px;height:1px;background:repeating-linear-gradient(90deg,#a0a0a0 0 1px,transparent 1px 2.170px)"></div>
<svg style="left:215.7px;top:209.5px" width="11.9" height="12.4" viewBox="0 0 11 9" preserveAspectRatio="none"><circle cx="5.500" cy="4.500" r="3.300" fill="#fff200" stroke="#5a5200" stroke-width="1.600" stroke-dasharray="1.300 1"/><circle cx="5.500" cy="4.500" r="1.300" fill="#6a6000"/></svg>
<div class="t" id="f86" style="left:235.3px;top:209.7px;font-size:12px;color:#000;font-family:'Liberation Serif','Noto Serif CJK SC',serif;letter-spacing:-0.07px;"><span style="font-size:11px">AZ-24</span></div>
<div class="a" style="left:203.8px;top:231.7px;width:9.8px;height:0.7px;height:1px;background:repeating-linear-gradient(90deg,#a0a0a0 0 1px,transparent 1px 2.170px)"></div>
<svg style="left:215.7px;top:225.5px" width="11.9" height="12.4" viewBox="0 0 11 9" preserveAspectRatio="none"><circle cx="5.500" cy="4.500" r="3.300" fill="#fff200" stroke="#5a5200" stroke-width="1.600" stroke-dasharray="1.300 1"/><circle cx="5.500" cy="4.500" r="1.300" fill="#6a6000"/></svg>
<div class="t" id="f87" style="left:235.3px;top:225.7px;font-size:12px;color:#000;font-family:'Liberation Serif','Noto Serif CJK SC',serif;letter-spacing:-0.07px;"><span style="font-size:11px">AZ-26</span></div>
<div class="a" style="left:203.8px;top:247.7px;width:9.8px;height:0.7px;height:1px;background:repeating-linear-gradient(90deg,#a0a0a0 0 1px,transparent 1px 2.170px)"></div>
<svg style="left:215.7px;top:241.5px" width="11.9" height="12.4" viewBox="0 0 11 9" preserveAspectRatio="none"><circle cx="5.500" cy="4.500" r="3.300" fill="#fff200" stroke="#5a5200" stroke-width="1.600" stroke-dasharray="1.300 1"/><circle cx="5.500" cy="4.500" r="1.300" fill="#6a6000"/></svg>
<div class="t" id="f88" style="left:235.3px;top:241.7px;font-size:12px;color:#000;font-family:'Liberation Serif','Noto Serif CJK SC',serif;letter-spacing:0.30px;"><span style="font-size:11px">KZ-37-1</span></div>
<div class="a" style="left:203.8px;top:263.7px;width:9.8px;height:0.7px;height:1px;background:repeating-linear-gradient(90deg,#a0a0a0 0 1px,transparent 1px 2.170px)"></div>
<svg style="left:215.7px;top:257.5px" width="11.9" height="12.4" viewBox="0 0 11 9" preserveAspectRatio="none"><circle cx="5.500" cy="4.500" r="3.300" fill="#fff200" stroke="#5a5200" stroke-width="1.600" stroke-dasharray="1.300 1"/><circle cx="5.500" cy="4.500" r="1.300" fill="#6a6000"/></svg>
<div class="t" id="f89" style="left:235.3px;top:257.7px;font-size:12px;color:#000;font-family:'Liberation Serif','Noto Serif CJK SC',serif;letter-spacing:-0.07px;"><span style="font-size:11px">AZ-44</span></div>
<div class="a" style="left:203.8px;top:279.7px;width:9.8px;height:0.7px;height:1px;background:repeating-linear-gradient(90deg,#a0a0a0 0 1px,transparent 1px 2.170px)"></div>
<svg style="left:215.7px;top:273.5px" width="11.9" height="12.4" viewBox="0 0 11 9" preserveAspectRatio="none"><circle cx="5.500" cy="4.500" r="3.300" fill="#fff200" stroke="#5a5200" stroke-width="1.600" stroke-dasharray="1.300 1"/><circle cx="5.500" cy="4.500" r="1.300" fill="#6a6000"/></svg>
<div class="t" id="f90" style="left:235.3px;top:273.7px;font-size:12px;color:#000;font-family:'Liberation Serif','Noto Serif CJK SC',serif;letter-spacing:-0.43px;"><span style="font-size:11px">GBZ-7</span></div>
<div class="a" style="left:203.8px;top:295.7px;width:9.8px;height:0.7px;height:1px;background:repeating-linear-gradient(90deg,#a0a0a0 0 1px,transparent 1px 2.170px)"></div>
<svg style="left:215.7px;top:289.5px" width="11.9" height="12.4" viewBox="0 0 11 9" preserveAspectRatio="none"><circle cx="5.500" cy="4.500" r="3.300" fill="#fff200" stroke="#5a5200" stroke-width="1.600" stroke-dasharray="1.300 1"/><circle cx="5.500" cy="4.500" r="1.300" fill="#6a6000"/></svg>
<div class="t" id="f91" style="left:235.3px;top:289.7px;font-size:12px;color:#000;font-family:'Liberation Serif','Noto Serif CJK SC',serif;letter-spacing:-0.16px;"><span style="font-size:11px">AZ-2</span></div>
<div class="a" style="left:203.8px;top:311.7px;width:9.8px;height:0.7px;height:1px;background:repeating-linear-gradient(90deg,#a0a0a0 0 1px,transparent 1px 2.170px)"></div>
<svg style="left:215.7px;top:305.5px" width="11.9" height="12.4" viewBox="0 0 11 9" preserveAspectRatio="none"><circle cx="5.500" cy="4.500" r="3.300" fill="#fff200" stroke="#5a5200" stroke-width="1.600" stroke-dasharray="1.300 1"/><circle cx="5.500" cy="4.500" r="1.300" fill="#6a6000"/></svg>
<div class="t" id="f92" style="left:235.3px;top:305.7px;font-size:12px;color:#000;font-family:'Liberation Serif','Noto Serif CJK SC',serif;letter-spacing:-0.16px;"><span style="font-size:11px">AZ-3</span></div>
<div class="a" style="left:203.8px;top:327.7px;width:9.8px;height:0.7px;height:1px;background:repeating-linear-gradient(90deg,#a0a0a0 0 1px,transparent 1px 2.170px)"></div>
<svg style="left:215.7px;top:321.5px" width="11.9" height="12.4" viewBox="0 0 11 9" preserveAspectRatio="none"><circle cx="5.500" cy="4.500" r="3.300" fill="#fff200" stroke="#5a5200" stroke-width="1.600" stroke-dasharray="1.300 1"/><circle cx="5.500" cy="4.500" r="1.300" fill="#6a6000"/></svg>
<div class="t" id="f93" style="left:235.3px;top:321.7px;font-size:12px;color:#000;font-family:'Liberation Serif','Noto Serif CJK SC',serif;letter-spacing:-0.16px;"><span style="font-size:11px">AZ-4</span></div>
<div class="a" style="left:203.8px;top:343.7px;width:9.8px;height:0.7px;height:1px;background:repeating-linear-gradient(90deg,#a0a0a0 0 1px,transparent 1px 2.170px)"></div>
<svg style="left:215.7px;top:337.5px" width="11.9" height="12.4" viewBox="0 0 11 9" preserveAspectRatio="none"><circle cx="5.500" cy="4.500" r="3.300" fill="#fff200" stroke="#5a5200" stroke-width="1.600" stroke-dasharray="1.300 1"/><circle cx="5.500" cy="4.500" r="1.300" fill="#6a6000"/></svg>
<div class="t" id="f94" style="left:235.3px;top:337.7px;font-size:12px;color:#000;font-family:'Liberation Serif','Noto Serif CJK SC',serif;letter-spacing:-0.16px;"><span style="font-size:11px">AZ-5</span></div>
<div class="a" style="left:203.8px;top:359.7px;width:9.8px;height:0.7px;height:1px;background:repeating-linear-gradient(90deg,#a0a0a0 0 1px,transparent 1px 2.170px)"></div>
<svg style="left:215.7px;top:353.5px" width="11.9" height="12.4" viewBox="0 0 11 9" preserveAspectRatio="none"><circle cx="5.500" cy="4.500" r="3.300" fill="#fff200" stroke="#5a5200" stroke-width="1.600" stroke-dasharray="1.300 1"/><circle cx="5.500" cy="4.500" r="1.300" fill="#6a6000"/></svg>
<div class="t" id="f95" style="left:235.3px;top:353.7px;font-size:12px;color:#000;font-family:'Liberation Serif','Noto Serif CJK SC',serif;letter-spacing:-0.16px;"><span style="font-size:11px">AZ-7</span></div>
<div class="a" style="left:203.8px;top:375.7px;width:9.8px;height:0.7px;height:1px;background:repeating-linear-gradient(90deg,#a0a0a0 0 1px,transparent 1px 2.170px)"></div>
<svg style="left:215.7px;top:369.5px" width="11.9" height="12.4" viewBox="0 0 11 9" preserveAspectRatio="none"><circle cx="5.500" cy="4.500" r="3.300" fill="#fff200" stroke="#5a5200" stroke-width="1.600" stroke-dasharray="1.300 1"/><circle cx="5.500" cy="4.500" r="1.300" fill="#6a6000"/></svg>
<div class="t" id="f96" style="left:235.3px;top:369.7px;font-size:12px;color:#000;font-family:'Liberation Serif','Noto Serif CJK SC',serif;letter-spacing:-0.16px;"><span style="font-size:11px">AZ-9</span></div>
<div class="a" style="left:203.8px;top:391.7px;width:9.8px;height:0.7px;height:1px;background:repeating-linear-gradient(90deg,#a0a0a0 0 1px,transparent 1px 2.170px)"></div>
<svg style="left:215.7px;top:385.5px" width="11.9" height="12.4" viewBox="0 0 11 9" preserveAspectRatio="none"><circle cx="5.500" cy="4.500" r="3.300" fill="#fff200" stroke="#5a5200" stroke-width="1.600" stroke-dasharray="1.300 1"/><circle cx="5.500" cy="4.500" r="1.300" fill="#6a6000"/></svg>
<div class="t" id="f97" style="left:235.3px;top:385.7px;font-size:12px;color:#000;font-family:'Liberation Serif','Noto Serif CJK SC',serif;letter-spacing:-0.07px;"><span style="font-size:11px">AZ-10</span></div>
<div class="a" style="left:203.8px;top:407.7px;width:9.8px;height:0.7px;height:1px;background:repeating-linear-gradient(90deg,#a0a0a0 0 1px,transparent 1px 2.170px)"></div>
<svg style="left:215.7px;top:401.5px" width="11.9" height="12.4" viewBox="0 0 11 9" preserveAspectRatio="none"><circle cx="5.500" cy="4.500" r="3.300" fill="#fff200" stroke="#5a5200" stroke-width="1.600" stroke-dasharray="1.300 1"/><circle cx="5.500" cy="4.500" r="1.300" fill="#6a6000"/></svg>
<div class="t" id="f98" style="left:235.3px;top:401.7px;font-size:12px;color:#000;font-family:'Liberation Serif','Noto Serif CJK SC',serif;letter-spacing:0.02px;"><span style="font-size:11px">AZ-11</span></div>
<div class="a" style="left:203.8px;top:423.7px;width:9.8px;height:0.7px;height:1px;background:repeating-linear-gradient(90deg,#a0a0a0 0 1px,transparent 1px 2.170px)"></div>
<svg style="left:215.7px;top:417.5px" width="11.9" height="12.4" viewBox="0 0 11 9" preserveAspectRatio="none"><circle cx="5.500" cy="4.500" r="3.300" fill="#fff200" stroke="#5a5200" stroke-width="1.600" stroke-dasharray="1.300 1"/><circle cx="5.500" cy="4.500" r="1.300" fill="#6a6000"/></svg>
<div class="t" id="f99" style="left:235.3px;top:417.7px;font-size:12px;color:#000;font-family:'Liberation Serif','Noto Serif CJK SC',serif;letter-spacing:-0.07px;"><span style="font-size:11px">AZ-12</span></div>
<div class="a" style="left:203.8px;top:439.7px;width:9.8px;height:0.7px;height:1px;background:repeating-linear-gradient(90deg,#a0a0a0 0 1px,transparent 1px 2.170px)"></div>
<svg style="left:215.7px;top:433.5px" width="11.9" height="12.4" viewBox="0 0 11 9" preserveAspectRatio="none"><circle cx="5.500" cy="4.500" r="3.300" fill="#fff200" stroke="#5a5200" stroke-width="1.600" stroke-dasharray="1.300 1"/><circle cx="5.500" cy="4.500" r="1.300" fill="#6a6000"/></svg>
<div class="t" id="f100" style="left:235.3px;top:433.7px;font-size:12px;color:#000;font-family:'Liberation Serif','Noto Serif CJK SC',serif;letter-spacing:-0.07px;"><span style="font-size:11px">AZ-13</span></div>
<div class="a" style="left:203.8px;top:455.7px;width:9.8px;height:0.7px;height:1px;background:repeating-linear-gradient(90deg,#a0a0a0 0 1px,transparent 1px 2.170px)"></div>
<div class="a" style="left:211.9px;top:447.7px;width:56.4px;height:16.0px;background:#2a5fc8"></div>
<svg style="left:215.7px;top:449.5px" width="11.9" height="12.4" viewBox="0 0 11 9" preserveAspectRatio="none"><circle cx="5.500" cy="4.500" r="3.300" fill="#fff200" stroke="#5a5200" stroke-width="1.600" stroke-dasharray="1.300 1"/><circle cx="5.500" cy="4.500" r="1.300" fill="#6a6000"/></svg>
<div class="t" id="f101" style="left:235.3px;top:449.7px;font-size:12px;color:#fff;font-family:'Liberation Serif','Noto Serif CJK SC',serif;letter-spacing:-0.07px;"><span style="font-size:11px">AZ-14</span></div>
<div class="a" style="left:203.8px;top:471.7px;width:9.8px;height:0.7px;height:1px;background:repeating-linear-gradient(90deg,#a0a0a0 0 1px,transparent 1px 2.170px)"></div>
<svg style="left:215.7px;top:465.5px" width="11.9" height="12.4" viewBox="0 0 11 9" preserveAspectRatio="none"><circle cx="5.500" cy="4.500" r="3.300" fill="#fff200" stroke="#5a5200" stroke-width="1.600" stroke-dasharray="1.300 1"/><circle cx="5.500" cy="4.500" r="1.300" fill="#6a6000"/></svg>
<div class="t" id="f102" style="left:235.3px;top:465.7px;font-size:12px;color:#000;font-family:'Liberation Serif','Noto Serif CJK SC',serif;letter-spacing:-0.07px;"><span style="font-size:11px">AZ-15</span></div>
<div class="a" style="left:203.8px;top:487.7px;width:9.8px;height:0.7px;height:1px;background:repeating-linear-gradient(90deg,#a0a0a0 0 1px,transparent 1px 2.170px)"></div>
<svg style="left:215.7px;top:481.5px" width="11.9" height="12.4" viewBox="0 0 11 9" preserveAspectRatio="none"><circle cx="5.500" cy="4.500" r="3.300" fill="#fff200" stroke="#5a5200" stroke-width="1.600" stroke-dasharray="1.300 1"/><circle cx="5.500" cy="4.500" r="1.300" fill="#6a6000"/></svg>
<div class="t" id="f103" style="left:235.3px;top:481.7px;font-size:12px;color:#000;font-family:'Liberation Serif','Noto Serif CJK SC',serif;letter-spacing:-0.07px;"><span style="font-size:11px">AZ-16</span></div>
<div class="a" style="left:203.8px;top:503.7px;width:9.8px;height:0.7px;height:1px;background:repeating-linear-gradient(90deg,#a0a0a0 0 1px,transparent 1px 2.170px)"></div>
<svg style="left:215.7px;top:497.5px" width="11.9" height="12.4" viewBox="0 0 11 9" preserveAspectRatio="none"><circle cx="5.500" cy="4.500" r="3.300" fill="#fff200" stroke="#5a5200" stroke-width="1.600" stroke-dasharray="1.300 1"/><circle cx="5.500" cy="4.500" r="1.300" fill="#6a6000"/></svg>
<div class="t" id="f104" style="left:235.3px;top:497.7px;font-size:12px;color:#000;font-family:'Liberation Serif','Noto Serif CJK SC',serif;letter-spacing:-0.07px;"><span style="font-size:11px">AZ-17</span></div>
<div class="a" style="left:203.8px;top:519.7px;width:9.8px;height:0.7px;height:1px;background:repeating-linear-gradient(90deg,#a0a0a0 0 1px,transparent 1px 2.170px)"></div>
<svg style="left:215.7px;top:513.5px" width="11.9" height="12.4" viewBox="0 0 11 9" preserveAspectRatio="none"><circle cx="5.500" cy="4.500" r="3.300" fill="#fff200" stroke="#5a5200" stroke-width="1.600" stroke-dasharray="1.300 1"/><circle cx="5.500" cy="4.500" r="1.300" fill="#6a6000"/></svg>
<div class="t" id="f105" style="left:235.3px;top:513.7px;font-size:12px;color:#000;font-family:'Liberation Serif','Noto Serif CJK SC',serif;letter-spacing:-0.07px;"><span style="font-size:11px">AZ-18</span></div>
<div class="a" style="left:203.8px;top:535.7px;width:9.8px;height:0.7px;height:1px;background:repeating-linear-gradient(90deg,#a0a0a0 0 1px,transparent 1px 2.170px)"></div>
<svg style="left:215.7px;top:529.5px" width="11.9" height="12.4" viewBox="0 0 11 9" preserveAspectRatio="none"><circle cx="5.500" cy="4.500" r="3.300" fill="#fff200" stroke="#5a5200" stroke-width="1.600" stroke-dasharray="1.300 1"/><circle cx="5.500" cy="4.500" r="1.300" fill="#6a6000"/></svg>
<div class="t" id="f106" style="left:235.3px;top:529.7px;font-size:12px;color:#000;font-family:'Liberation Serif','Noto Serif CJK SC',serif;letter-spacing:-0.07px;"><span style="font-size:11px">AZ-19</span></div>
<div class="a" style="left:203.8px;top:551.7px;width:9.8px;height:0.7px;height:1px;background:repeating-linear-gradient(90deg,#a0a0a0 0 1px,transparent 1px 2.170px)"></div>
<svg style="left:215.7px;top:545.5px" width="11.9" height="12.4" viewBox="0 0 11 9" preserveAspectRatio="none"><circle cx="5.500" cy="4.500" r="3.300" fill="#fff200" stroke="#5a5200" stroke-width="1.600" stroke-dasharray="1.300 1"/><circle cx="5.500" cy="4.500" r="1.300" fill="#6a6000"/></svg>
<div class="t" id="f107" style="left:235.3px;top:545.7px;font-size:12px;color:#000;font-family:'Liberation Serif','Noto Serif CJK SC',serif;letter-spacing:-0.07px;"><span style="font-size:11px">AZ-20</span></div>
<div class="a" style="left:203.8px;top:567.7px;width:9.8px;height:0.7px;height:1px;background:repeating-linear-gradient(90deg,#a0a0a0 0 1px,transparent 1px 2.170px)"></div>
<svg style="left:215.7px;top:561.5px" width="11.9" height="12.4" viewBox="0 0 11 9" preserveAspectRatio="none"><circle cx="5.500" cy="4.500" r="3.300" fill="#fff200" stroke="#5a5200" stroke-width="1.600" stroke-dasharray="1.300 1"/><circle cx="5.500" cy="4.500" r="1.300" fill="#6a6000"/></svg>
<div class="t" id="f108" style="left:235.3px;top:561.7px;font-size:12px;color:#000;font-family:'Liberation Serif','Noto Serif CJK SC',serif;letter-spacing:-0.07px;"><span style="font-size:11px">AZ-21</span></div>
<div class="a" style="left:203.8px;top:583.7px;width:9.8px;height:0.7px;height:1px;background:repeating-linear-gradient(90deg,#a0a0a0 0 1px,transparent 1px 2.170px)"></div>
<svg style="left:215.7px;top:577.5px" width="11.9" height="12.4" viewBox="0 0 11 9" preserveAspectRatio="none"><circle cx="5.500" cy="4.500" r="3.300" fill="#fff200" stroke="#5a5200" stroke-width="1.600" stroke-dasharray="1.300 1"/><circle cx="5.500" cy="4.500" r="1.300" fill="#6a6000"/></svg>
<div class="t" id="f109" style="left:235.3px;top:577.7px;font-size:12px;color:#000;font-family:'Liberation Serif','Noto Serif CJK SC',serif;letter-spacing:-0.07px;"><span style="font-size:11px">AZ-22</span></div>
<div class="a" style="left:203.8px;top:599.7px;width:9.8px;height:0.7px;height:1px;background:repeating-linear-gradient(90deg,#a0a0a0 0 1px,transparent 1px 2.170px)"></div>
<svg style="left:215.7px;top:593.5px" width="11.9" height="12.4" viewBox="0 0 11 9" preserveAspectRatio="none"><circle cx="5.500" cy="4.500" r="3.300" fill="#fff200" stroke="#5a5200" stroke-width="1.600" stroke-dasharray="1.300 1"/><circle cx="5.500" cy="4.500" r="1.300" fill="#6a6000"/></svg>
<div class="t" id="f110" style="left:235.3px;top:593.7px;font-size:12px;color:#000;font-family:'Liberation Serif','Noto Serif CJK SC',serif;letter-spacing:-0.07px;"><span style="font-size:11px">AZ-23</span></div>
<div class="a" style="left:203.8px;top:615.7px;width:9.8px;height:0.7px;height:1px;background:repeating-linear-gradient(90deg,#a0a0a0 0 1px,transparent 1px 2.170px)"></div>
<svg style="left:215.7px;top:609.5px" width="11.9" height="12.4" viewBox="0 0 11 9" preserveAspectRatio="none"><circle cx="5.500" cy="4.500" r="3.300" fill="#fff200" stroke="#5a5200" stroke-width="1.600" stroke-dasharray="1.300 1"/><circle cx="5.500" cy="4.500" r="1.300" fill="#6a6000"/></svg>
<div class="t" id="f111" style="left:235.3px;top:609.7px;font-size:12px;color:#000;font-family:'Liberation Serif','Noto Serif CJK SC',serif;letter-spacing:-0.07px;"><span style="font-size:11px">AZ-25</span></div>
<div class="a" style="left:203.8px;top:631.7px;width:9.8px;height:0.7px;height:1px;background:repeating-linear-gradient(90deg,#a0a0a0 0 1px,transparent 1px 2.170px)"></div>
<svg style="left:215.7px;top:625.5px" width="11.9" height="12.4" viewBox="0 0 11 9" preserveAspectRatio="none"><circle cx="5.500" cy="4.500" r="3.300" fill="#fff200" stroke="#5a5200" stroke-width="1.600" stroke-dasharray="1.300 1"/><circle cx="5.500" cy="4.500" r="1.300" fill="#6a6000"/></svg>
<div class="t" id="f112" style="left:235.3px;top:625.7px;font-size:12px;color:#000;font-family:'Liberation Serif','Noto Serif CJK SC',serif;letter-spacing:-0.07px;"><span style="font-size:11px">AZ-27</span></div>
<div class="a" style="left:203.8px;top:647.7px;width:9.8px;height:0.7px;height:1px;background:repeating-linear-gradient(90deg,#a0a0a0 0 1px,transparent 1px 2.170px)"></div>
<svg style="left:215.7px;top:641.5px" width="11.9" height="12.4" viewBox="0 0 11 9" preserveAspectRatio="none"><circle cx="5.500" cy="4.500" r="3.300" fill="#fff200" stroke="#5a5200" stroke-width="1.600" stroke-dasharray="1.300 1"/><circle cx="5.500" cy="4.500" r="1.300" fill="#6a6000"/></svg>
<div class="t" id="f113" style="left:235.3px;top:641.7px;font-size:12px;color:#000;font-family:'Liberation Serif','Noto Serif CJK SC',serif;letter-spacing:0.06px;"><span style="font-size:11px">AZ-7a</span></div>
<div class="a" style="left:203.8px;top:663.7px;width:9.8px;height:0.7px;height:1px;background:repeating-linear-gradient(90deg,#a0a0a0 0 1px,transparent 1px 2.170px)"></div>
<svg style="left:215.7px;top:657.5px" width="11.9" height="12.4" viewBox="0 0 11 9" preserveAspectRatio="none"><circle cx="5.500" cy="4.500" r="3.300" fill="#fff200" stroke="#5a5200" stroke-width="1.600" stroke-dasharray="1.300 1"/><circle cx="5.500" cy="4.500" r="1.300" fill="#6a6000"/></svg>
<div class="t" id="f114" style="left:235.3px;top:657.7px;font-size:12px;color:#000;font-family:'Liberation Serif','Noto Serif CJK SC',serif;letter-spacing:-0.07px;"><span style="font-size:11px">AZ-28</span></div>
<div class="a" style="left:203.8px;top:679.7px;width:9.8px;height:0.7px;height:1px;background:repeating-linear-gradient(90deg,#a0a0a0 0 1px,transparent 1px 2.170px)"></div>
<svg style="left:215.7px;top:673.5px" width="11.9" height="12.4" viewBox="0 0 11 9" preserveAspectRatio="none"><circle cx="5.500" cy="4.500" r="3.300" fill="#fff200" stroke="#5a5200" stroke-width="1.600" stroke-dasharray="1.300 1"/><circle cx="5.500" cy="4.500" r="1.300" fill="#6a6000"/></svg>
<div class="t" id="f115" style="left:235.3px;top:673.7px;font-size:12px;color:#000;font-family:'Liberation Serif','Noto Serif CJK SC',serif;letter-spacing:-0.07px;"><span style="font-size:11px">AZ-29</span></div>
<div class="a" style="left:203.8px;top:695.7px;width:9.8px;height:0.7px;height:1px;background:repeating-linear-gradient(90deg,#a0a0a0 0 1px,transparent 1px 2.170px)"></div>
<svg style="left:215.7px;top:689.5px" width="11.9" height="12.4" viewBox="0 0 11 9" preserveAspectRatio="none"><circle cx="5.500" cy="4.500" r="3.300" fill="#fff200" stroke="#5a5200" stroke-width="1.600" stroke-dasharray="1.300 1"/><circle cx="5.500" cy="4.500" r="1.300" fill="#6a6000"/></svg>
<div class="t" id="f116" style="left:235.3px;top:689.7px;font-size:12px;color:#000;font-family:'Liberation Serif','Noto Serif CJK SC',serif;letter-spacing:-0.07px;"><span style="font-size:11px">AZ-30</span></div>
<div class="a" style="left:357.8px;top:111.0px;width:1003.9px;height:595.0px;background:#fff"></div>
<div class="a" style="left:1361.7px;top:111.0px;width:4.3px;height:595.0px;background:#f0f0f0"></div>
<div class="a" style="left:357.8px;top:132.4px;width:1003.9px;height:1.0px;background:#d9d9d9"></div>
<div class="a" style="left:359.9px;top:111.7px;width:61.8px;height:22.1px;background:#fff;border:1px solid #d0d0d0;border-bottom:none"></div>
<div class="t" id="f117" style="left:365.4px;top:116.7px;font-size:12px;color:#000;font-family:'Liberation Serif','Noto Serif CJK SC',serif;letter-spacing:-0.08px;">属性编辑</div>
<div class="a" style="left:363.2px;top:136.5px;width:308.4px;height:271.6px;background:#fff;border:1px solid #a0a0a0"></div>
<div class="a" style="left:363.7px;top:137.2px;width:211.9px;height:22.8px;background:linear-gradient(180deg,#fff,#eee)"></div>
<div class="a" style="left:575.7px;top:137.2px;width:125.8px;height:22.8px;background:linear-gradient(180deg,#fbe3b3,#f0b65a)"></div>
<div class="t" id="f118" style="left:456.4px;top:143.6px;font-size:12px;color:#000;font-family:'Liberation Serif','Noto Serif CJK SC',serif;letter-spacing:-0.21px;">属性名称</div>
<div class="t" id="f119" style="left:620.1px;top:143.6px;font-size:12px;color:#800088;font-family:'Liberation Serif','Noto Serif CJK SC',serif;letter-spacing:-0.26px;">属性值</div>
<div class="a" style="left:363.7px;top:159.9px;width:20.6px;height:19.1px;background:#f3f3f3;border-top:1px solid #c8c8c8;border-right:1px solid #c8c8c8"></div>
<div class="a" style="left:384.3px;top:159.9px;width:191.3px;height:19.1px;border-top:1px solid #c8c8c8"></div>
<div class="a" style="left:575.7px;top:159.9px;width:95.9px;height:19.1px;border-top:1px solid #c8c8c8"></div>
<div class="t" id="f120" style="left:370.0px;top:164.4px;font-size:11px;color:#000;font-family:'Liberation Serif','Noto Serif CJK SC',serif;letter-spacing:0.35px;">1</div>
<div class="t" id="f121" style="left:404.9px;top:163.9px;font-size:12px;color:#0000e8;font-family:'Liberation Serif','Noto Serif CJK SC',serif;letter-spacing:-0.08px;">名称</div>
<div class="t" id="f122" style="left:577.8px;top:163.9px;font-size:12px;color:#000;font-family:'Liberation Serif','Noto Serif CJK SC',serif;letter-spacing:-0.01px;"><span style="font-size:11px">AZ-14</span></div>
<div class="a" style="left:363.7px;top:179.0px;width:20.6px;height:19.1px;background:#f3f3f3;border-top:1px solid #c8c8c8;border-right:1px solid #c8c8c8"></div>
<div class="a" style="left:384.3px;top:179.0px;width:191.3px;height:19.1px;border-top:1px solid #c8c8c8"></div>
<div class="a" style="left:575.7px;top:179.0px;width:95.9px;height:19.1px;border-top:1px solid #c8c8c8"></div>
<div class="t" id="f123" style="left:370.0px;top:183.5px;font-size:11px;color:#000;font-family:'Liberation Serif','Noto Serif CJK SC',serif;letter-spacing:0.35px;">2</div>
<div class="t" id="f124" style="left:404.9px;top:183.0px;font-size:12px;color:#0000e8;font-family:'Liberation Serif','Noto Serif CJK SC',serif;letter-spacing:-0.08px;">类别</div>
<div class="t" id="f125" style="left:577.8px;top:183.0px;font-size:12px;color:#000;font-family:'Liberation Serif','Noto Serif CJK SC',serif;letter-spacing:-0.08px;">暗柱</div>
<div class="a" style="left:363.7px;top:198.1px;width:20.6px;height:19.1px;background:#f3f3f3;border-top:1px solid #c8c8c8;border-right:1px solid #c8c8c8"></div>
<div class="a" style="left:384.3px;top:198.1px;width:191.3px;height:19.1px;border-top:1px solid #c8c8c8"></div>
<div class="a" style="left:575.7px;top:198.1px;width:95.9px;height:19.1px;border-top:1px solid #c8c8c8"></div>
<div class="t" id="f126" style="left:370.0px;top:202.5px;font-size:11px;color:#000;font-family:'Liberation Serif','Noto Serif CJK SC',serif;letter-spacing:0.35px;">3</div>
<div class="t" id="f127" style="left:404.9px;top:202.0px;font-size:12px;color:#0000e8;font-family:'Liberation Serif','Noto Serif CJK SC',serif;letter-spacing:-0.08px;">截面编辑</div>
<div class="t" id="f128" style="left:577.8px;top:202.0px;font-size:12px;color:#000;font-family:'Liberation Serif','Noto Serif CJK SC',serif;letter-spacing:-0.09px;">是</div>
<div class="a" style="left:363.7px;top:217.1px;width:20.6px;height:19.1px;background:#f3f3f3;border-top:1px solid #c8c8c8;border-right:1px solid #c8c8c8"></div>
<div class="a" style="left:384.3px;top:217.1px;width:191.3px;height:19.1px;border-top:1px solid #c8c8c8"></div>
<div class="a" style="left:575.7px;top:217.1px;width:95.9px;height:19.1px;border-top:1px solid #c8c8c8"></div>
<div class="t" id="f129" style="left:370.0px;top:221.6px;font-size:11px;color:#000;font-family:'Liberation Serif','Noto Serif CJK SC',serif;letter-spacing:0.35px;">4</div>
<div class="t" id="f130" style="left:404.9px;top:221.1px;font-size:12px;color:#000;font-family:'Liberation Serif','Noto Serif CJK SC',serif;letter-spacing:0.14px;">截面宽<span style="font-size:11px">(B</span>边<span style="font-size:11px">)(mm)</span></div>
<div class="t" id="f131" style="left:577.8px;top:221.1px;font-size:12px;color:#000;font-family:'Liberation Serif','Noto Serif CJK SC',serif;letter-spacing:0.35px;"><span style="font-size:11px">900</span></div>
<div class="a" style="left:363.7px;top:236.2px;width:20.6px;height:19.1px;background:#f3f3f3;border-top:1px solid #c8c8c8;border-right:1px solid #c8c8c8"></div>
<div class="a" style="left:384.3px;top:236.2px;width:191.3px;height:19.1px;border-top:1px solid #c8c8c8"></div>
<div class="a" style="left:575.7px;top:236.2px;width:95.9px;height:19.1px;border-top:1px solid #c8c8c8"></div>
<div class="t" id="f132" style="left:370.0px;top:240.7px;font-size:11px;color:#000;font-family:'Liberation Serif','Noto Serif CJK SC',serif;letter-spacing:0.35px;">5</div>
<div class="t" id="f133" style="left:404.9px;top:240.2px;font-size:12px;color:#000;font-family:'Liberation Serif','Noto Serif CJK SC',serif;letter-spacing:0.08px;">截面高<span style="font-size:11px">(H</span>边<span style="font-size:11px">)(mm)</span></div>
<div class="t" id="f134" style="left:577.8px;top:240.2px;font-size:12px;color:#000;font-family:'Liberation Serif','Noto Serif CJK SC',serif;letter-spacing:0.35px;"><span style="font-size:11px">250</span></div>
<div class="a" style="left:363.7px;top:255.3px;width:20.6px;height:19.1px;background:#f3f3f3;border-top:1px solid #c8c8c8;border-right:1px solid #c8c8c8"></div>
<div class="a" style="left:384.3px;top:255.3px;width:191.3px;height:19.1px;border-top:1px solid #c8c8c8"></div>
<div class="a" style="left:575.7px;top:255.3px;width:95.9px;height:19.1px;border-top:1px solid #c8c8c8"></div>
<div class="t" id="f135" style="left:370.0px;top:259.7px;font-size:11px;color:#000;font-family:'Liberation Serif','Noto Serif CJK SC',serif;letter-spacing:0.35px;">6</div>
<div class="t" id="f136" style="left:404.9px;top:259.2px;font-size:12px;color:#8a8a8a;font-family:'Liberation Serif','Noto Serif CJK SC',serif;letter-spacing:-0.08px;">全部纵筋</div>
<div class="t" id="f137" style="left:577.8px;top:259.2px;font-size:12px;color:#9a9a9a;font-family:'Liberation Serif','Noto Serif CJK SC',serif;"><span style="font-size:11px">8</span><span style="color:#111;font-size:11px">⏀</span><span style="font-size:11px">18+6</span><span style="color:#111;font-size:11px">⏀</span><span style="font-size:11px">12</span></div>
<div class="a" style="left:363.7px;top:274.4px;width:20.6px;height:19.1px;background:#f9cf8c;border-top:1px solid #c8c8c8;border-right:1px solid #c8c8c8"></div>
<div class="a" style="left:384.3px;top:274.4px;width:191.3px;height:19.1px;background:#0a6cd6"></div>
<div class="a" style="left:575.7px;top:274.4px;width:95.9px;height:19.1px;background:#d6e6f7;border-top:1px solid #c8c8c8"></div>
<div class="t" id="f138" style="left:370.0px;top:278.8px;font-size:11px;color:#6a1060;font-family:'Liberation Serif','Noto Serif CJK SC',serif;letter-spacing:0.35px;">7</div>
<div class="t" id="f139" style="left:404.9px;top:278.3px;font-size:12px;color:#fff;font-family:'Liberation Serif','Noto Serif CJK SC',serif;letter-spacing:-0.08px;">柱类型</div>
<div class="t" id="f140" style="left:577.8px;top:278.3px;font-size:12px;color:#000;font-family:'Liberation Serif','Noto Serif CJK SC',serif;letter-spacing:1.76px;">(中柱)</div>
<div class="a" style="left:363.7px;top:293.4px;width:20.6px;height:19.1px;background:#f3f3f3;border-top:1px solid #c8c8c8;border-right:1px solid #c8c8c8"></div>
<div class="a" style="left:384.3px;top:293.4px;width:191.3px;height:19.1px;border-top:1px solid #c8c8c8"></div>
<div class="a" style="left:575.7px;top:293.4px;width:95.9px;height:19.1px;border-top:1px solid #c8c8c8"></div>
<div class="t" id="f141" style="left:370.0px;top:297.9px;font-size:11px;color:#000;font-family:'Liberation Serif','Noto Serif CJK SC',serif;letter-spacing:0.35px;">8</div>
<div class="t" id="f142" style="left:404.9px;top:297.4px;font-size:12px;color:#0000e8;font-family:'Liberation Serif','Noto Serif CJK SC',serif;letter-spacing:-0.08px;">其它箍筋</div>
<div class="a" style="left:363.7px;top:312.5px;width:20.6px;height:19.1px;background:#f3f3f3;border-top:1px solid #c8c8c8;border-right:1px solid #c8c8c8"></div>
<div class="a" style="left:384.3px;top:312.5px;width:191.3px;height:19.1px;border-top:1px solid #c8c8c8"></div>
<div class="a" style="left:575.7px;top:312.5px;width:95.9px;height:19.1px;border-top:1px solid #c8c8c8"></div>
<div class="t" id="f143" style="left:370.0px;top:316.9px;font-size:11px;color:#000;font-family:'Liberation Serif','Noto Serif CJK SC',serif;letter-spacing:0.35px;">9</div>
<div class="t" id="f144" style="left:404.9px;top:316.4px;font-size:12px;color:#000;font-family:'Liberation Serif','Noto Serif CJK SC',serif;letter-spacing:-0.08px;">备注</div>
<div class="a" style="left:363.7px;top:331.6px;width:20.6px;height:19.1px;background:#f3f3f3;border-top:1px solid #c8c8c8;border-right:1px solid #c8c8c8"></div>
<div class="a" style="left:384.3px;top:331.6px;width:191.3px;height:19.1px;border-top:1px solid #c8c8c8"></div>
<div class="a" style="left:575.7px;top:331.6px;width:95.9px;height:19.1px;border-top:1px solid #c8c8c8"></div>
<div class="t" id="f145" style="left:367.1px;top:336.0px;font-size:11px;color:#000;font-family:'Liberation Serif','Noto Serif CJK SC',serif;letter-spacing:0.35px;">10</div>
<svg style="left:387.6px;top:335.7px" width="10.3" height="11.6" viewBox="0 0 9.5 8.4" preserveAspectRatio="none"><rect x=".5" y=".5" width="8.500" height="7.400" fill="#fff" stroke="#9a9a9a" stroke-width=".8"/><path d="M2.500 4.200 H7 M4.750 2.200 V6.200" stroke="#333" stroke-width=".9"/></svg>
<div class="t" id="f146" style="left:404.9px;top:335.5px;font-size:12px;color:#8a8a8a;font-family:'Liberation Serif','Noto Serif CJK SC',serif;letter-spacing:-0.08px;">芯柱</div>
<div class="a" style="left:363.7px;top:350.6px;width:20.6px;height:19.1px;background:#f3f3f3;border-top:1px solid #c8c8c8;border-right:1px solid #c8c8c8"></div>
<div class="a" style="left:384.3px;top:350.6px;width:191.3px;height:19.1px;border-top:1px solid #c8c8c8"></div>
<div class="a" style="left:575.7px;top:350.6px;width:95.9px;height:19.1px;border-top:1px solid #c8c8c8"></div>
<div class="t" id="f147" style="left:367.1px;top:355.1px;font-size:11px;color:#000;font-family:'Liberation Serif','Noto Serif CJK SC',serif;letter-spacing:0.35px;">15</div>
<svg style="left:387.6px;top:354.8px" width="10.3" height="11.6" viewBox="0 0 9.5 8.4" preserveAspectRatio="none"><rect x=".5" y=".5" width="8.500" height="7.400" fill="#fff" stroke="#9a9a9a" stroke-width=".8"/><path d="M2.500 4.200 H7 M4.750 2.200 V6.200" stroke="#333" stroke-width=".9"/></svg>
<div class="t" id="f148" style="left:404.9px;top:354.6px;font-size:12px;color:#8a8a8a;font-family:'Liberation Serif','Noto Serif CJK SC',serif;letter-spacing:-0.08px;">其它属性</div>
<div class="a" style="left:363.7px;top:369.7px;width:20.6px;height:19.1px;background:#f3f3f3;border-top:1px solid #c8c8c8;border-right:1px solid #c8c8c8"></div>
<div class="a" style="left:384.3px;top:369.7px;width:191.3px;height:19.1px;border-top:1px solid #c8c8c8"></div>
<div class="a" style="left:575.7px;top:369.7px;width:95.9px;height:19.1px;border-top:1px solid #c8c8c8"></div>
<div class="t" id="f149" style="left:367.1px;top:374.1px;font-size:11px;color:#000;font-family:'Liberation Serif','Noto Serif CJK SC',serif;letter-spacing:0.35px;">28</div>
<svg style="left:387.6px;top:373.9px" width="10.3" height="11.6" viewBox="0 0 9.5 8.4" preserveAspectRatio="none"><rect x=".5" y=".5" width="8.500" height="7.400" fill="#fff" stroke="#9a9a9a" stroke-width=".8"/><path d="M2.500 4.200 H7 M4.750 2.200 V6.200" stroke="#333" stroke-width=".9"/></svg>
<div class="t" id="f150" style="left:404.9px;top:373.6px;font-size:12px;color:#8a8a8a;font-family:'Liberation Serif','Noto Serif CJK SC',serif;letter-spacing:-0.08px;">锚固搭接</div>
<div class="a" style="left:363.7px;top:388.8px;width:20.6px;height:19.1px;background:#f3f3f3;border-top:1px solid #c8c8c8;border-right:1px solid #c8c8c8"></div>
<div class="a" style="left:384.3px;top:388.8px;width:191.3px;height:19.1px;border-top:1px solid #c8c8c8"></div>
<div class="a" style="left:575.7px;top:388.8px;width:95.9px;height:19.1px;border-top:1px solid #c8c8c8"></div>
<div class="t" id="f151" style="left:367.1px;top:393.2px;font-size:11px;color:#000;font-family:'Liberation Serif','Noto Serif CJK SC',serif;letter-spacing:0.35px;">43</div>
<svg style="left:387.6px;top:392.9px" width="10.3" height="11.6" viewBox="0 0 9.5 8.4" preserveAspectRatio="none"><rect x=".5" y=".5" width="8.500" height="7.400" fill="#fff" stroke="#9a9a9a" stroke-width=".8"/><path d="M2.500 4.200 H7 M4.750 2.200 V6.200" stroke="#333" stroke-width=".9"/></svg>
<div class="t" id="f152" style="left:404.9px;top:392.7px;font-size:12px;color:#8a8a8a;font-family:'Liberation Serif','Noto Serif CJK SC',serif;letter-spacing:-0.08px;">显示样式</div>
<div class="a" style="left:384.3px;top:137.2px;width:0.8px;height:270.9px;background:#c0c0c0"></div>
<div class="a" style="left:575.7px;top:137.2px;width:0.8px;height:270.9px;background:#c0c0c0"></div>
<div class="a" style="left:671.6px;top:132.4px;width:672.7px;height:570.8px;background:linear-gradient(180deg,#9dbbdc 0,#bcd2ea 3.500%,#c9dcf0 6%,#c6daef 100%);border:1px solid #6a7a8c"></div>
<div class="t" id="f153" style="left:679.2px;top:145.3px;font-size:12px;color:#000;font-family:'Liberation Sans','Noto Sans CJK SC',sans-serif;letter-spacing:-0.08px;">截面编辑</div>
<div class="a" style="left:679.2px;top:164.1px;width:656.4px;height:530.8px;background:#f0f0f0;border:1px solid #dfe8f2"></div>
<div class="a" style="left:680.8px;top:166.8px;width:647.2px;height:29.6px;background:linear-gradient(180deg,#fdfdfd,#efefef);border-radius:2px"></div>
<div class="a" style="left:680.8px;top:197.9px;width:202.7px;height:25.5px;background:linear-gradient(180deg,#fdfdfd,#efefef);border-radius:2px"></div>
<div class="a" style="left:686.8px;top:172.4px;width:1.1px;height:19.3px;background:repeating-linear-gradient(180deg,#a8a8a8 0 1.500px,transparent 1.500px 4px)"></div>
<div class="a" style="left:686.8px;top:201.3px;width:1.1px;height:19.3px;background:repeating-linear-gradient(180deg,#a8a8a8 0 1.500px,transparent 1.500px 4px)"></div>
<div class="t" id="f154" style="left:696.0px;top:176.4px;font-size:12px;color:#000;font-family:'Liberation Sans','Noto Sans CJK SC',sans-serif;letter-spacing:-0.08px;">布角筋</div>
<div class="t" id="f155" style="left:741.5px;top:176.4px;font-size:12px;color:#000;font-family:'Liberation Sans','Noto Sans CJK SC',sans-serif;letter-spacing:0.28px;">布边筋</div>
<div class="t" id="f156" style="left:788.2px;top:176.4px;font-size:12px;color:#000;font-family:'Liberation Sans','Noto Sans CJK SC',sans-serif;letter-spacing:-0.08px;">特殊布筋</div>
<div class="t" id="f157" style="left:845.6px;top:176.4px;font-size:12px;color:#000;font-family:'Liberation Sans','Noto Sans CJK SC',sans-serif;letter-spacing:0.19px;">对齐钢筋</div>
<div class="t" id="f158" style="left:904.2px;top:176.4px;font-size:12px;color:#000;font-family:'Liberation Sans','Noto Sans CJK SC',sans-serif;letter-spacing:-0.08px;">画箍筋</div>
<div class="t" id="f159" style="left:956.2px;top:176.4px;font-size:12px;color:#000;font-family:'Liberation Sans','Noto Sans CJK SC',sans-serif;letter-spacing:-0.08px;">修改纵筋</div>
<div class="t" id="f160" style="left:1013.7px;top:176.4px;font-size:12px;color:#000;font-family:'Liberation Sans','Noto Sans CJK SC',sans-serif;letter-spacing:-0.08px;">修改箍筋</div>
<div class="t" id="f161" style="left:1072.2px;top:176.4px;font-size:12px;color:#000;font-family:'Liberation Sans','Noto Sans CJK SC',sans-serif;letter-spacing:-0.08px;">编辑弯钩</div>
<div class="t" id="f162" style="left:1129.7px;top:176.4px;font-size:12px;color:#000;font-family:'Liberation Sans','Noto Sans CJK SC',sans-serif;letter-spacing:-0.08px;">端头伸缩</div>
<div class="t" id="f163" style="left:1188.2px;top:176.4px;font-size:12px;color:#000;font-family:'Liberation Sans','Noto Sans CJK SC',sans-serif;letter-spacing:-0.08px;">删除</div>
<div class="a" style="left:948.6px;top:173.7px;width:1.1px;height:17.9px;background:#c0c0c0"></div>
<div class="t" id="f164" style="left:694.9px;top:204.3px;font-size:12px;color:#8a8a8a;font-family:'Liberation Sans','Noto Sans CJK SC',sans-serif;letter-spacing:-0.08px;">钢筋信息</div>
<div class="a" style="left:744.8px;top:199.2px;width:133.3px;height:22.1px;background:#fff;border:1px solid #7a7a7a"></div>
<div class="t" id="f165" style="left:748.0px;top:203.6px;font-size:12px;color:#8a8a8a;font-family:'Liberation Sans','Noto Sans CJK SC',sans-serif;letter-spacing:-0.15px;">C8@150</div>
<svg style="left:868.4px;top:208.9px" width="5.4" height="3.4" viewBox="0 0 5 2.5" preserveAspectRatio="none"><path d="M0 0 H5 L2.500 2.500Z" fill="#555"/></svg>
<div class="a" style="left:683.5px;top:226.1px;width:647.8px;height:441.9px;background:#000;border:2px solid #f00"></div>
<div class="a" style="left:680.8px;top:673.6px;width:145.3px;height:21.4px;border-right:1px solid #c8c8c8"></div>
<div class="t" id="f166" style="left:687.3px;top:679.1px;font-size:11px;color:#000;font-family:'Liberation Serif','Noto Serif CJK SC',serif;letter-spacing:1.32px;">(X: 621 Y: 439)</div>
<svg style="left:1325.9px;top:683.9px" width="8.7" height="9.7" viewBox="0 0 8 7" preserveAspectRatio="none"><path d="M6 0 H8 V1.500 H6Z M3 2.700 H5 V4.200 H3Z M6 2.700 H8 V4.200 H6Z M0 5.500 H2 V7 H0Z M3 5.500 H5 V7 H3Z M6 5.500 H8 V7 H6Z" fill="#b8b8b8"/></svg>
<div class="a" style="left:1344.9px;top:133.7px;width:14.6px;height:570.8px;background:#f0f0f0"></div>
<div class="a" style="left:1344.9px;top:155.8px;width:14.6px;height:271.6px;background:#cdcdcd"></div>
<svg style="left:1348.1px;top:143.4px" width="7.6" height="5.5" viewBox="0 0 7 4" preserveAspectRatio="none"><path d="M.5 3.500 L3.500 .5 L6.500 3.500" fill="none" stroke="#505050" stroke-width="1.200"/></svg>
<svg style="left:1348.1px;top:688.7px" width="7.6" height="5.5" viewBox="0 0 7 4" preserveAspectRatio="none"><path d="M.5 .5 L3.500 3.500 L6.500 .5" fill="none" stroke="#505050" stroke-width="1.200"/></svg>
<div class="a" style="left:0.0px;top:706.0px;width:1366.0px;height:22.1px;background:#f0f0f0;border-top:1px solid #dcdcdc"></div>
<div class="a" style="left:1.1px;top:708.0px;width:146.9px;height:18.6px;border:1px solid #fafafa;border-right-color:#d2d2d2;border-bottom-color:#d2d2d2;background:#f2f2f2"></div>
<div class="a" style="left:149.6px;top:708.0px;width:78.1px;height:18.6px;border:1px solid #fafafa;border-right-color:#d2d2d2;border-bottom-color:#d2d2d2;background:#f2f2f2"></div>
<div class="a" style="left:229.8px;top:708.0px;width:98.1px;height:18.6px;border:1px solid #fafafa;border-right-color:#d2d2d2;border-bottom-color:#d2d2d2;background:#f2f2f2"></div>
<div class="a" style="left:329.6px;top:708.0px;width:47.7px;height:18.6px;border:1px solid #fafafa;border-right-color:#d2d2d2;border-bottom-color:#d2d2d2;background:#f2f2f2"></div>
<div class="a" style="left:379.4px;top:708.0px;width:913.9px;height:18.6px;border:1px solid #fafafa;border-right-color:#d2d2d2;border-bottom-color:#d2d2d2;background:#f2f2f2"></div>
<div class="a" style="left:1295.5px;top:708.0px;width:66.1px;height:18.6px;border:1px solid #fafafa;border-right-color:#d2d2d2;border-bottom-color:#d2d2d2;background:#f2f2f2"></div>
<div class="t" id="f167" style="left:151.8px;top:711.7px;font-size:12px;color:#000;font-family:'Liberation Serif','Noto Serif CJK SC',serif;letter-spacing:0.22px;">层高<span style="font-size:11px">:4.5m</span></div>
<div class="t" id="f168" style="left:232.0px;top:711.7px;font-size:12px;color:#000;font-family:'Liberation Serif','Noto Serif CJK SC',serif;letter-spacing:0.75px;">底标高<span style="font-size:11px">:-0.05m</span></div>
<div class="t" id="f169" style="left:331.7px;top:711.7px;font-size:12px;color:#000;font-family:'Liberation Serif','Noto Serif CJK SC',serif;"><span style="font-size:11px">0</span></div>
<div class="t" id="f170" style="left:381.6px;top:711.7px;font-size:12px;color:#000;font-family:'Liberation Serif','Noto Serif CJK SC',serif;letter-spacing:-0.13px;">在此设置该构件是边柱还是角柱或者中柱；边柱<span style="font-size:11px">-B</span>表示该柱的<span style="font-size:11px">B</span>边为外侧，边柱<span style="font-size:11px">-H</span>表示该柱的<span style="font-size:11px">H</span>边为外侧；</div>
<div class="t" id="f171" style="left:1297.7px;top:712.2px;font-size:11px;color:#000;font-family:'Liberation Serif','Noto Serif CJK SC',serif;letter-spacing:0.81px;">501.6 FPS</div>
<div class="a" style="left:0;top:728px;width:1366px;height:40px;background:#0a1318"></div>
<div class="a" style="left:0;top:728px;width:48px;height:40px;background:#000"></div>
<svg style="left:16px;top:740px" width="17" height="17"><path d="M0 2.400 L7 1.400 V8 H0Z M8 1.250 L17 0 V8 H8Z M0 9 H7 V15.600 L0 14.600Z M8 9 H17 V17 L8 15.750Z" fill="#fff"/></svg>
<div class="a" style="left:48px;top:728px;width:344px;height:40px;background:#343434"></div>
<div class="a" style="left:58px;top:738px;width:20px;height:20px;border-radius:50%;border:2.600px solid #f2f2f2"></div>
<div class="t" style="left:84px;top:741px;font-size:14px;color:#8c8c8c">在这里输入你要搜索的内容</div>
<svg style="left:366px;top:739px" width="11" height="18"><rect x="2.500" y=".6" width="6" height="10.500" rx="3" fill="none" stroke="#9a9a9a" stroke-width="1.100"/><path d="M.6 8 Q.6 13.500 5.500 13.500 Q10.400 13.500 10.400 8 M5.500 13.500 V17 M3 17 H8" fill="none" stroke="#9a9a9a" stroke-width="1.100"/></svg>
<svg style="left:405px;top:740px" width="22" height="16"><rect x="5" y="1" width="12" height="14" fill="none" stroke="#fff" stroke-width="1.300"/><path d="M3 3 H1 V13 H3 M19 3 H21 V13 H19" fill="none" stroke="#fff" stroke-width="1.200"/></svg>
<svg style="left:454px;top:736px" width="24" height="24" viewBox="-12 -12 24 24"><g fill="#e6e6e6" transform="rotate(12)"><rect x="-11" y="-11" width="10.300" height="10.300" rx="4.600"/><rect x=".7" y="-11" width="10.300" height="10.300" rx="4.600"/><rect x="-11" y=".7" width="10.300" height="10.300" rx="4.600"/><rect x=".7" y=".7" width="10.300" height="10.300" rx="4.600"/><circle r="3"/></g><g fill="none" stroke="#0a1318" stroke-width="1.300" transform="rotate(12)"><path d="M-3 -3 Q-8 -4 -8 -8 M3 -3 Q4 -8 8 -8 M3 3 Q8 4 8 8 M-3 3 Q-4 8 -8 8"/></g></svg>
<svg style="left:506px;top:736px" width="25" height="24"><path d="M19.500 14 H8.500 A5.200 5.200 0 0 0 18 16.500 L21 18 A9 9 0 1 1 22 12.500 V14Z M8.600 10.800 H18 A4.800 4.800 0 0 0 8.600 10.800Z" fill="#f0f0f0" fill-rule="evenodd"/><path d="M21.500 2 C15 0 3 10 3.500 22" fill="none" stroke="#f0f0f0" stroke-width="1.200"/></svg>
<svg style="left:557px;top:737px" width="22" height="22"><path d="M19 5 C14 0 4 2 2.500 10 C1.500 17 9 21 15 18.500 C20 16 20 9.500 15 8 C11 7 8 10 9 13 C10 15.500 13 15 13.500 13" fill="none" stroke="#e0e0e0" stroke-width="1.700"/></svg>
<svg style="left:574px;top:734px" width="12" height="12"><path d="M6 1 Q10 1.500 10 6.500 L11.500 9.500 H.5 L2 6.500 Q2 1.500 6 1Z M4.500 10 H7.500 V11.500 H4.500Z" fill="#f5b81c"/></svg>
<div class="a" style="left:598px;top:740px;width:1px;height:16px;background:#4a5258"></div><div class="a" style="left:601px;top:740px;width:1px;height:16px;background:#4a5258"></div>
<svg style="left:624px;top:737px" width="22" height="22"><path d="M1 10 C2 3 7 .5 11.500 .5 C18 .5 21.500 5.500 21 13 H7.500 C8 17 12 19 19 16.500 V20.500 C10 23.500 2.500 20 2.500 13 C2.500 9.500 5 6.500 8.500 5.500 C4.500 6 2 8 1 10Z M7.600 9.300 H15 C15 6 12.500 4.800 11 4.800 C9 4.800 7.800 6.800 7.600 9.300Z" fill="#0d7be0" fill-rule="evenodd"/></svg>
<svg style="left:660px;top:735px" width="27" height="26"><path d="M21.500 16 H9.500 A5.300 5.300 0 0 0 19 18.300 L23 19.500 A9.600 9.600 0 1 1 24 14 V16Z M9.600 12.300 H19.500 A5 5 0 0 0 9.600 12.300Z" fill="#2c9ae8" fill-rule="evenodd"/><path d="M24.500 3 C20 -2 3 9 2.500 21 C2.500 25 6 25.500 9 23.500" fill="none" stroke="#f3c430" stroke-width="2"/></svg>
<svg style="left:698px;top:737px" width="24" height="22"><path d="M1 3 H9 L11 5.500 H23 V20 H1Z" fill="#f7c948"/><path d="M1 7 H23 V20 H1Z" fill="#ffe38a"/><path d="M6.500 13 H17.500 V20 H14 V16.500 H10 V20 H6.500Z" fill="#2a8fe0"/></svg>
<svg style="left:735px;top:735px" width="26" height="26"><path d="M22 7 C18 0 5 1 2.500 11 C.5 20 9 26 17.500 22.500 C24 19.500 23.500 11 17.500 10 C13.500 9.500 11 12.500 12 15.500 C13 18 16.500 17 16.500 15 C19 17.500 15.500 21.500 11.500 19.500 C5.500 16.500 8.500 6.500 16 6.500 C19 6.500 20.500 7.500 22 7Z" fill="#2a9df4"/><path d="M14 3 C18 1.500 22 2 24.500 .5 C24 4 21 6.500 18 6Z" fill="#2a9df4"/></svg>
<svg style="left:773px;top:735px" width="27" height="26"><circle cx="13" cy="13.500" r="11.500" fill="#4bc42f"/><path d="M20 15 H9.500 A4.800 4.800 0 0 0 18 17.500 L21 18.800 A8.300 8.300 0 1 1 21.500 12.500 V15Z M9.600 11.800 H17.800 A4.300 4.300 0 0 0 9.600 11.800Z" fill="#fff" fill-rule="evenodd"/><path d="M25 2 C20 1 6 8 1.500 22" fill="none" stroke="#eaffea" stroke-width="1.400"/></svg>
<svg style="left:813px;top:736px" width="24" height="24"><path d="M2 7 L12 1 L22 7 V10 H2Z" fill="#2a9ad8"/><rect x="1" y="9" width="22" height="5" fill="#d8412a"/><rect x="1" y="14" width="22" height="4.500" fill="#3a8ad8"/><rect x="1" y="18.500" width="22" height="4.500" fill="#3aa84a"/><rect x="10" y="5" width="4" height="18" fill="#9a6a3a"/><rect x="9" y="11" width="6" height="4" fill="#e8d8b8"/></svg>
<div class="a" style="left:851px;top:736px;width:24px;height:24px;border-radius:2px;background:linear-gradient(180deg,#2f7fd6,#1b55ac);border:1.500px solid #8fa2b8"></div>
<div class="t" style="left:854px;top:743px;font-size:10px;color:#d8e6fa;font-weight:bold;letter-spacing:-.5px;transform:scaleY(1.200)">CAD</div>
<div class="a" style="left:883px;top:728px;width:37px;height:40px;background:#2f383e"></div>
<div class="a" style="left:889px;top:736px;width:24px;height:24px;border-radius:5px;background:linear-gradient(180deg,#2aa3f5,#1187e6)"></div>
<svg style="left:893px;top:740px" width="16" height="16"><path d="M8 1.500 V14 M8 14 Q8 15.500 6.500 15 M2 6 Q.5 8 2 10 H14 Q15.500 8 14 6 M8 1.500 Q5.500 1 5.500 3 Q5.500 4.500 8 4.500 Q10.500 4.500 10.500 3 Q10.500 1 8 1.500" fill="none" stroke="#fff" stroke-width="1.600"/></svg>
<div class="a" style="left:695px;top:765px;width:30px;height:3px;background:#76b9ed"></div>
<div class="a" style="left:733px;top:765px;width:30px;height:3px;background:#76b9ed"></div>
<div class="a" style="left:771px;top:765px;width:30px;height:3px;background:#76b9ed"></div>
<div class="a" style="left:809px;top:765px;width:30px;height:3px;background:#76b9ed"></div>
<div class="a" style="left:847px;top:765px;width:30px;height:3px;background:#76b9ed"></div>
<div class="a" style="left:883px;top:765px;width:37px;height:3px;background:#76b9ed"></div>
<div class="a" style="left:934px;top:740px;width:1px;height:16px;background:#4a5258"></div><div class="a" style="left:937px;top:740px;width:1px;height:16px;background:#4a5258"></div>
<div class="t" style="left:950px;top:742px;font-size:12px;color:#fff;letter-spacing:-.5px">链接</div>
<div class="t" style="left:1004px;top:734px;font-size:12px;color:#fff">21%</div>
<div class="t" style="left:992px;top:750px;font-size:12px;color:#fff">CPU使用</div>
<svg style="left:1059px;top:744px" width="14" height="8"><path d="M1 7 L7 1 L13 7" fill="none" stroke="#fff" stroke-width="1.300"/></svg>
<svg style="left:1081px;top:741px" width="18" height="13"><rect x="5" y="2.600" width="11" height="8" fill="none" stroke="#fff" stroke-width="1.100"/><rect x="6.500" y="4" width="6" height="5.200" fill="#fff"/><rect x="16.500" y="5" width="1.200" height="3.500" fill="#fff"/><path d="M0 2 H2 M0 5 H2 M2 .8 V6.200 Q4.500 6 4.500 3.500 Q4.500 1 2 .8Z M4.500 3.500 H6 M3 6 Q3 9 5 9" fill="#fff" stroke="#fff" stroke-width=".9"/></svg>
<svg style="left:1108px;top:741px" width="15" height="14"><path d="M1 13 A12 12 0 0 1 13 1 M4.500 13 A8.500 8.500 0 0 1 13 4.500 M8 13 A5 5 0 0 1 13 8" fill="none" stroke="#cfcfcf" stroke-width="1.300"/><circle cx="12" cy="12" r="1.600" fill="#fff"/></svg>
<svg style="left:1130px;top:740px" width="17" height="15"><path d="M1 5 H4 L8 1.500 V13.500 L4 10 H1Z" fill="none" stroke="#fff" stroke-width="1.100"/><path d="M10 5 Q11.500 7.500 10 10 M12 3.500 Q14.500 7.500 12 11.500" fill="none" stroke="#fff" stroke-width="1"/><path d="M14.200 1.500 Q17.500 7.500 14.200 13.500" fill="none" stroke="#777" stroke-width="1"/></svg>
<svg style="left:1154px;top:741px" width="24" height="14"><rect x=".6" y=".6" width="22.800" height="12.800" rx="1" fill="none" stroke="#fff" stroke-width="1.100"/><path d="M3 4 H21 M3 6.800 H21" stroke="#fff" stroke-width="1.300" stroke-dasharray="1.400 1.200"/><path d="M5.500 10 H18.500" stroke="#fff" stroke-width="1.200"/></svg>
<div class="t" style="left:1187px;top:741px;font-size:13px;color:#fff">中</div>
<svg style="left:1213px;top:739px" width="18" height="18"><path d="M2 3 L15 .5 Q17 .5 17.300 2.500 L17.500 13 Q17.500 15 15.500 15.500 L4 17.500 Q2 17.500 1.500 15.500 L.5 5 Q.5 3.300 2 3Z" fill="#f4511e"/><path d="M13.500 5 Q9 3 6 5.500 Q4.500 8 9 9 Q13 10 11.500 12 Q9 14 4.500 12" fill="none" stroke="#fff" stroke-width="2.200"/></svg>
<div class="a" style="left:1299px;top:728px;width:67px;height:40px;background:#000"></div>
<div class="t" style="left:1262px;top:733px;font-size:13px;color:#fff">15:49</div>
<div class="t" style="left:1250px;top:752px;font-size:13px;color:#fff">2018/5/9</div>
<svg style="left:1324px;top:740px" width="19" height="17"><path d="M.7 .7 H17.300 V12.300 H11 L9 14.800 L7 12.300 H.7Z" fill="none" stroke="#fff" stroke-width="1.300"/></svg>
<div class="a" style="left:1360px;top:728px;width:1px;height:40px;background:#4a4a4a"></div>
</div>
</div>
<div class="a" style="left:374px;top:98px;width:222px;height:22px;background:#060606"></div>
<div class="a" style="left:40px;top:98px;width:25px;height:589px;background:#3f3f3f"></div>
<div class="t" style="left:868px;top:100px;font-size:6.500px;line-height:8px;color:#6a6a6a;white-space:normal;width:56px">您的掌上服务专家</div>
<div class="a" style="left:943px;top:98px;width:26px;height:21px;background:repeating-linear-gradient(90deg,#1a1a1a 0 2px,#5a5a5a 2px 3px,#1a1a1a 3px 4px,#4a4a4a 4px 6px),#222;background-blend-mode:multiply;opacity:.9"></div>
<div class="a" style="left:969px;top:98px;width:8px;height:14px;background:#7a3a12"></div>
<div class="a" style="left:409px;top:103px;width:38px;height:11px;border:1px solid #242424"></div>
<div class="a" style="left:458px;top:103px;width:39px;height:11px;border:1px solid #242424"></div>
<div class="a" style="left:504px;top:103px;width:33px;height:11px;border:1px solid #242424"></div>
<div class="a" style="left:427px;top:113px;width:1px;height:7px;background:#0a3a0a"></div><div class="a" style="left:483px;top:98px;width:1px;height:4px;background:#0a5a0a"></div>
<svg style="left:0;top:0" width="1366" height="768" viewBox="0 0 1366 768"><path d="M721.5 286 V583" stroke="#3a3a3a" stroke-width="1" stroke-dasharray="3.200 2.300"/><path d="M761.3 286 V583" stroke="#3a3a3a" stroke-width="1" stroke-dasharray="3.200 2.300"/><path d="M801.2 286 V583" stroke="#3a3a3a" stroke-width="1" stroke-dasharray="3.200 2.300"/><path d="M841 286 V583" stroke="#3a3a3a" stroke-width="1" stroke-dasharray="3.200 2.300"/><path d="M880.8 286 V583" stroke="#3a3a3a" stroke-width="1" stroke-dasharray="3.200 2.300"/><path d="M960.4 286 V583" stroke="#3a3a3a" stroke-width="1" stroke-dasharray="3.200 2.300"/><path d="M1000.2 286 V583" stroke="#3a3a3a" stroke-width="1" stroke-dasharray="3.200 2.300"/><path d="M1040 286 V583" stroke="#3a3a3a" stroke-width="1" stroke-dasharray="3.200 2.300"/><path d="M1080 286 V583" stroke="#3a3a3a" stroke-width="1" stroke-dasharray="3.200 2.300"/><path d="M1120.5 286 V583" stroke="#3a3a3a" stroke-width="1" stroke-dasharray="3.200 2.300"/><path d="M715 296.3 H1127" stroke="#3a3a3a" stroke-width="1" stroke-dasharray="3.200 2.300"/><path d="M715 327.8 H1127" stroke="#3a3a3a" stroke-width="1" stroke-dasharray="3.200 2.300"/><path d="M715 359.3 H1127" stroke="#3a3a3a" stroke-width="1" stroke-dasharray="3.200 2.300"/><path d="M715 391 H1127" stroke="#3a3a3a" stroke-width="1" stroke-dasharray="3.200 2.300"/><path d="M715 454.3 H1127" stroke="#3a3a3a" stroke-width="1" stroke-dasharray="3.200 2.300"/><path d="M715 485.8 H1127" stroke="#3a3a3a" stroke-width="1" stroke-dasharray="3.200 2.300"/><path d="M715 517.3 H1127" stroke="#3a3a3a" stroke-width="1" stroke-dasharray="3.200 2.300"/><path d="M715 548.8 H1127" stroke="#3a3a3a" stroke-width="1" stroke-dasharray="3.200 2.300"/><path d="M715 580.3 H1127" stroke="#3a3a3a" stroke-width="1" stroke-dasharray="3.200 2.300"/><path d="M920.5 286 V583" stroke="#6a6a6a" stroke-width="1" stroke-dasharray="4 2.500"/><path d="M712 422.800 H1131" stroke="#5a5a5a" stroke-width="1" stroke-dasharray="4 2.500"/><text x="721" y="428.500" font-size="9" fill="#4a4a4a" font-family="Liberation Sans,sans-serif">-500</text><text x="922.500" y="428.500" font-size="9" fill="#5a5a5a" font-family="Liberation Sans,sans-serif">0</text><text x="1122" y="428.500" font-size="9" fill="#4a4a4a" font-family="Liberation Sans,sans-serif">500</text><text x="914" y="586.500" font-size="9" fill="#4a4a4a" font-family="Liberation Sans,sans-serif">-500</text><rect x="740" y="383.500" width="361.500" height="78" fill="none" stroke="#fff" stroke-width="1.300"/><rect x="856" y="391" width="235" height="63.500" rx="6" ry="5" fill="none" stroke="#0000ff" stroke-width="3.800"/><path d="M1062.300 426.300 L1090 447 M1055.400 432.200 L1084 453" stroke="#0000ff" stroke-width="3.500" stroke-linecap="round"/><rect x="749.800" y="391" width="168.500" height="63.500" rx="6" ry="5" fill="none" stroke="#ff0000" stroke-width="3.800"/><path d="M752.500 395.800 L779 419 M760 392 L786.500 413.400" stroke="#f00" stroke-width="3.500" stroke-linecap="round"/><path d="M802.700 391 V454.500 M811 391.500 L839.300 413.400 M811 454 L839.300 432.200" stroke="#f00" stroke-width="3.800" stroke-linecap="round" fill="none"/><path d="M934.6 413 L965.4 391.500 Q970.9 390 970.9 396 V449.500 Q970.9 455.500 965.4 454 L934.6 432.200" stroke="#f00" stroke-width="3.800" stroke-linecap="round" stroke-linejoin="round" fill="none"/><path d="M994.6 413 L1025.1 391.500 Q1030.6 390 1030.6 396 V449.500 Q1030.6 455.500 1025.1 454 L994.6 432.200" stroke="#f00" stroke-width="3.800" stroke-linecap="round" stroke-linejoin="round" fill="none"/><ellipse cx="755" cy="395.5" rx="2.800" ry="2.300" fill="none" stroke="#f0e000" stroke-width="1.200"/><path d="M753.5 396.7 L756.5 394.3" stroke="#f0e000" stroke-width=".8"/><ellipse cx="755" cy="450" rx="2.800" ry="2.300" fill="none" stroke="#f0e000" stroke-width="1.200"/><path d="M753.5 451.2 L756.5 448.8" stroke="#f0e000" stroke-width=".8"/><ellipse cx="808" cy="395.5" rx="2.800" ry="2.300" fill="none" stroke="#e020e0" stroke-width="1.200"/><path d="M806.5 396.7 L809.5 394.3" stroke="#e020e0" stroke-width=".8"/><ellipse cx="808" cy="450" rx="2.800" ry="2.300" fill="none" stroke="#e020e0" stroke-width="1.200"/><path d="M806.5 451.2 L809.5 448.8" stroke="#e020e0" stroke-width=".8"/><ellipse cx="860.5" cy="395.5" rx="2.800" ry="2.300" fill="none" stroke="#e020e0" stroke-width="1.200"/><path d="M859.0 396.7 L862.0 394.3" stroke="#e020e0" stroke-width=".8"/><ellipse cx="860.5" cy="450" rx="2.800" ry="2.300" fill="none" stroke="#e020e0" stroke-width="1.200"/><path d="M859.0 451.2 L862.0 448.8" stroke="#e020e0" stroke-width=".8"/><ellipse cx="912.5" cy="395.5" rx="2.800" ry="2.300" fill="none" stroke="#e020e0" stroke-width="1.200"/><path d="M911.0 396.7 L914.0 394.3" stroke="#e020e0" stroke-width=".8"/><ellipse cx="912.5" cy="450" rx="2.800" ry="2.300" fill="none" stroke="#e020e0" stroke-width="1.200"/><path d="M911.0 451.2 L914.0 448.8" stroke="#e020e0" stroke-width=".8"/><ellipse cx="965" cy="395.5" rx="2.800" ry="2.300" fill="none" stroke="#20d0e0" stroke-width="1.200"/><path d="M963.5 396.7 L966.5 394.3" stroke="#20d0e0" stroke-width=".8"/><ellipse cx="965" cy="450" rx="2.800" ry="2.300" fill="none" stroke="#20d0e0" stroke-width="1.200"/><path d="M963.5 451.2 L966.5 448.8" stroke="#20d0e0" stroke-width=".8"/><ellipse cx="1025" cy="395.5" rx="2.800" ry="2.300" fill="none" stroke="#e020e0" stroke-width="1.200"/><path d="M1023.5 396.7 L1026.5 394.3" stroke="#e020e0" stroke-width=".8"/><ellipse cx="1025" cy="450" rx="2.800" ry="2.300" fill="none" stroke="#e020e0" stroke-width="1.200"/><path d="M1023.5 451.2 L1026.5 448.8" stroke="#e020e0" stroke-width=".8"/><ellipse cx="1085" cy="395.5" rx="2.800" ry="2.300" fill="none" stroke="#e0c000" stroke-width="1.200"/><path d="M1083.5 396.7 L1086.5 394.3" stroke="#e0c000" stroke-width=".8"/><ellipse cx="1085" cy="450" rx="2.800" ry="2.300" fill="none" stroke="#e0c000" stroke-width="1.200"/><path d="M1083.5 451.2 L1086.5 448.8" stroke="#e0c000" stroke-width=".8"/><path d="M732 474.200 H1110 M740 465 V483 M920.500 465 V483 M1101.500 465 V483 M731.500 481.500 L750 468 M911.500 481.500 L930 468 M1092.500 481.500 L1111 468" stroke="#00ff00" stroke-width="1.500" fill="none"/><path d="M1117 376.500 V468.500 M1104.500 383.300 H1129 M1104.500 422.600 H1129 M1104.500 461.700 H1129 M1108.500 376.500 L1126 390 M1108.500 415.800 L1126 429.300 M1108.500 455 L1126 468.500" stroke="#00ff00" stroke-width="1.500" fill="none"/><path d="M1102 382.600 L1143.500 350.400" stroke="#b8b8b8" stroke-width="1"/><text x="818.5" y="491.3" font-size="13.500" fill="#fff" font-family="Liberation Serif,serif" textLength="25" lengthAdjust="spacingAndGlyphs">450</text><text x="998.5" y="491.3" font-size="13.500" fill="#fff" font-family="Liberation Serif,serif" textLength="25" lengthAdjust="spacingAndGlyphs">450</text><text x="1121.500" y="407.5" font-size="13.500" fill="#fff" font-family="Liberation Serif,serif" textLength="23.500" lengthAdjust="spacingAndGlyphs">125</text><text x="1121.500" y="446.5" font-size="13.500" fill="#fff" font-family="Liberation Serif,serif" textLength="23.500" lengthAdjust="spacingAndGlyphs">125</text><text x="1144.500" y="330" font-size="12" fill="#fff" font-family="Noto Serif CJK SC,serif" textLength="29.5" lengthAdjust="spacingAndGlyphs">角筋</text><text x="1144.500" y="342.2" font-size="12" fill="#fff" font-family="Noto Serif CJK SC,serif" textLength="29.5" lengthAdjust="spacingAndGlyphs">箍筋</text><text x="1144.500" y="354.5" font-size="12" fill="#fff" font-family="Noto Serif CJK SC,serif" textLength="60" lengthAdjust="spacingAndGlyphs">其它纵筋</text><text x="1215.800" y="330" font-size="12.500" fill="#00d400" font-family="Liberation Mono,monospace" textLength="74" lengthAdjust="spacingAndGlyphs">2C18+2C12</text><text x="1215.800" y="342.2" font-size="12.500" fill="#00d400" font-family="Liberation Mono,monospace" textLength="49" lengthAdjust="spacingAndGlyphs">C8@150</text><text x="1215.800" y="354.8" font-size="12.500" fill="#00d400" font-family="Liberation Mono,monospace" textLength="32.5" lengthAdjust="spacingAndGlyphs">2C12</text></svg>
<div class="a" style="left:651px;top:125.500px;width:95px;height:27px;background:#f5f5f5;border-radius:0 13.500px 13.500px 0;box-shadow:0 1px 3px rgba(0,0,0,.35)"></div>
<div class="a" style="left:630.600px;top:120.500px;width:41.500px;height:35.500px;border-radius:50%;background:#f0f0f0;box-shadow:0 1px 4px rgba(0,0,0,.45)"></div>
<div class="a" style="left:632px;top:121.700px;width:38.700px;height:33px;border-radius:50%;background:linear-gradient(180deg,#2a8f55 0,#2f9a5a 29%,#3fbf60 30%,#3ab95c 100%)"></div>
<div class="t" style="left:637.500px;top:132px;font-size:12.500px;color:#eaffea;letter-spacing:.2px;transform:scaleY(.85)">68%</div>
<svg style="left:677.500px;top:131px" width="6" height="16"><path d="M3 0 L6 2.800 H4 V5.500 H2 V2.800 H0Z" fill="#e8412a"/><path d="M3 16 L6 13.200 H4 V10.500 H2 V13.200 H0Z" fill="#2fa84a"/></svg>
<div class="t" style="left:691px;top:129.500px;font-size:8.500px;color:#333;transform:scaleX(1);transform-origin:0 0">0.09K/s</div>
<div class="t" style="left:691px;top:140.500px;font-size:8.500px;color:#333;transform:scaleX(1);transform-origin:0 0">0.09K/s</div>
<div class="a" style="left:724.500px;top:134.500px;width:15px;height:12px;border-radius:50%;background:#2f7fe0"></div>
<div class="a" style="left:720px;top:139px;width:30px;height:1px;background:transparent"></div>
<div class="a" style="left:730px;top:122px;width:173px;height:17px;background:#fafcff;border:1px solid #c5d6ea;border-radius:2px"></div>
<svg style="left:711.500px;top:119.500px" width="26" height="20.500" viewBox="0 0 22 23" preserveAspectRatio="none"><path d="M3 4 L18 1 Q20.500 1 21 3.500 L21.500 16 Q21.500 18.500 19 19 L5 22 Q2.500 22 2 19.500 L.5 7 Q.5 4.500 3 4Z" fill="#f4511e"/><path d="M16.500 7 Q11 4 7.500 7.500 Q6 10.500 11 11.500 Q16 12.500 14.500 15.500 Q11 18.500 5.500 15.500" fill="none" stroke="#fff" stroke-width="2.600"/></svg>
<div class="t" style="left:743px;top:123px;font-size:13px;color:#1f7fe0;font-weight:bold">中</div>
<svg style="left:763px;top:125px" width="12" height="10"><circle cx="2.500" cy="2.500" r="1.700" fill="none" stroke="#1f7fe0" stroke-width="1"/><path d="M8.500 5 Q10.500 5 9.500 7.500 L8 9.500" fill="#1f7fe0" stroke="#1f7fe0" stroke-width="1.200"/></svg>
<svg style="left:782px;top:123px" width="15" height="15"><circle cx="7.500" cy="7.500" r="6.300" fill="none" stroke="#1f7fe0" stroke-width="1.300"/><circle cx="5.300" cy="6" r="1" fill="#1f7fe0"/><circle cx="9.700" cy="6" r="1" fill="#1f7fe0"/><path d="M4.500 9 Q7.500 12 10.500 9" fill="none" stroke="#1f7fe0" stroke-width="1.200"/></svg>
<svg style="left:805px;top:123px" width="11" height="15"><rect x="3" y="0" width="5" height="9" rx="2.500" fill="#1f7fe0"/><path d="M.8 6.500 Q.8 11 5.500 11 Q10.200 11 10.200 6.500 M5.500 11 V14 M3 14.200 H8" fill="none" stroke="#1f7fe0" stroke-width="1.200"/></svg>
<svg style="left:823px;top:125px" width="16" height="11"><rect x=".6" y=".6" width="14.800" height="9.800" rx="1" fill="none" stroke="#1f7fe0" stroke-width="1.200"/><path d="M3 3.500 H13" stroke="#1f7fe0" stroke-width="1.400" stroke-dasharray="1.500 1"/><path d="M4 7 H12" stroke="#1f7fe0" stroke-width="1.300"/></svg>
<svg style="left:845px;top:124px" width="16" height="13"><circle cx="6" cy="3" r="2.500" fill="#a8b4c4"/><path d="M1 11 Q1 6 6 6 Q9 6 10 8 H15 V12.500 H1Z" fill="#a8b4c4"/><rect x="8" y="8.500" width="6" height="3" fill="#e8eef6"/></svg>
<svg style="left:864px;top:124px" width="15" height="13"><path d="M1 3 L5 .5 Q7.500 2.500 10 .5 L14 3 L12 6 L11 5.200 V12.500 H4 V5.200 L3 6Z" fill="#1f7fe0"/></svg>
<svg style="left:884px;top:123px" width="15" height="15"><path d="M13.500 3.500 A4 4 0 0 1 8 8 L3 13.500 Q1.500 14.500 .8 13.200 Q.3 12 1.500 11 L7 6.500 A4 4 0 0 1 11.500 1 L9.500 3.500 L11 5.500Z" fill="#1f7fe0"/></svg>
<div class="a" style="left:1284.500px;top:125.500px;width:35px;height:35px;border-radius:50%;background:#2a2a2a"></div>
<svg style="left:1293.500px;top:134.500px" width="17" height="17"><path d="M1 1 L16 16 M16 1 L1 16" stroke="#fff" stroke-width="2"/></svg>
<div class="a" style="left:1286px;top:383px;width:42px;height:42px;background:#c4c4c4"></div>
<svg style="left:1296px;top:394px" width="22" height="18"><path d="M1 1.500 H21 M1.500 16.500 L11 7.500 L20.500 16.500" fill="none" stroke="#fff" stroke-width="2"/></svg>
<div class="a" style="left:1286px;top:434.8px;width:42px;height:42px;background:#ff6600;color:#fff;font-size:14.500px;line-height:18px;text-align:center;padding-top:2px">意见<br>反馈</div>
<div class="a" style="left:1286px;top:488px;width:42px;height:42px;background:#ff6600;color:#fff;font-size:14.500px;line-height:18px;text-align:center;padding-top:2px">关注<br>我们</div>
<div class="a" style="left:1286px;top:540px;width:42px;height:42px;background:#ff6600;color:#fff;font-size:14.500px;line-height:18px;text-align:center;padding-top:2px">Q Q<br>咨询</div>
<svg style="left:1353px;top:104px" width="9" height="6"><path d="M0 6 H9 L4.500 0Z" fill="#505050"/></svg>
<svg style="left:1353.500px;top:675.500px" width="8" height="5"><path d="M0 0 H8 L4 5Z" fill="#505050"/></svg>
<div class="a" style="left:1351px;top:437px;width:13px;height:100px;background:#c1c1c1"></div>
<svg style="left:45px;top:691px" width="6" height="9"><path d="M6 0 V9 L0 4.500Z" fill="#a3a3a3"/></svg>
<svg style="left:1339px;top:691px" width="6" height="9"><path d="M0 0 V9 L6 4.500Z" fill="#505050"/></svg>
<div class="a" style="left:57px;top:689px;width:1267px;height:13px;background:#c1c1c1"></div>
<div class="a" style="left:1349px;top:687px;width:17px;height:17px;background:#dcdcdc"></div>
<div class="a" style="left:0;top:676px;width:40px;height:1px;background:#e6e6e6"></div>
<svg style="left:13.500px;top:683.500px" width="13" height="13"><path d="M6.500 0 V13 M0 6.500 H13" stroke="#333" stroke-width="2.300"/></svg>
<div class="a" style="left:5px;top:118px;width:28px;height:28px;background:#fdd640;border:1px solid #f3c62e"></div>
<svg style="left:10px;top:122px" width="19" height="19"><path d="M9.500 .8 L12.200 6.500 L18.500 7.300 L13.900 11.600 L15.100 17.800 L9.500 14.700 L3.900 17.800 L5.100 11.600 L.5 7.300 L6.800 6.500Z" fill="#fff"/></svg>
<div class="a" style="left:5px;top:164px;width:24px;height:26px;background:#5a9bf5;border-radius:2px"></div><div class="a" style="left:28px;top:168px;width:4px;height:22px;background:#8dbaf8;border-radius:0 2px 2px 0"></div>
<svg style="left:8px;top:169px" width="18" height="17"><rect x="1" y="1" width="15" height="3.500" fill="#fff"/><rect x="1" y="8" width="5.500" height="7" fill="#fff"/><rect x="9" y="8" width="7" height="2" fill="#fff"/><rect x="9" y="12.500" width="7" height="2" fill="#fff"/></svg>
<div class="a" style="left:5px;top:208px;width:28px;height:28px;background:#fdd640;border:1px solid #f3c62e"></div>
<svg style="left:7px;top:211px" width="25" height="22"><path d="M11 7 C5 7 1 12 2 16 C3 20 9 21 14 20 C19 19 21 15 19 12 C18 10.500 16 11 16 11 C16.500 9 15 7.500 13 8.500 C12.500 8.800 11.500 7 11 7Z" fill="#e6162d"/><ellipse cx="10.500" cy="15" rx="5.500" ry="4" fill="#fff"/><circle cx="9.500" cy="15.300" r="2.400" fill="#222"/><path d="M16.500 6.500 Q19.500 6 20 9 M16 3 Q23 2 23.500 9" fill="none" stroke="#f08a1c" stroke-width="1.600"/></svg>
<div class="a" style="left:5px;top:253px;width:28px;height:28px;background:#fff;border:2px dashed #e8483a;border-image:repeating-linear-gradient(45deg,#e8483a 0 4px,#fff 4px 6px,#4a9af0 6px 10px,#fff 10px 12px) 2"></div>
<div class="t" style="left:10px;top:257px;font-size:19px;color:#e8483a">@</div>
<div class="a" id="status"></div>
<div class="a" id="task"></div>

<!-- logo -->
<svg style="left:0;top:0" width="70" height="70" viewBox="0 0 70 70">
<defs>
<linearGradient id="lg1" x1="0" y1="0" x2="1" y2="0"><stop offset="0" stop-color="#22cdbd"/><stop offset="1" stop-color="#0bdc62"/></linearGradient>
<linearGradient id="lg2" x1="0" y1="0" x2="0" y2="1"><stop offset="0" stop-color="#0bdc62"/><stop offset="0.5" stop-color="#19dc68"/><stop offset="1" stop-color="#ffffff"/></linearGradient>
<linearGradient id="lg3" x1="0" y1="0" x2="0" y2="1"><stop offset="0.3" stop-color="#22cdbd"/><stop offset="1" stop-color="#38c6f2"/></linearGradient>
</defs>
<circle cx="34.400" cy="29.800" r="22.400" fill="url(#lg1)"/>
<path d="M13.500 38 A22.400 22.400 0 0 0 34.400 52.200 L41 45 L20 38 Z" fill="url(#lg3)"/>
<path d="M56.800 30 A22.400 22.400 0 0 1 49 47 L31 61.500 L20.500 61.500 L39 45 L51 31 Z" fill="url(#lg2)"/>
<path d="M47.500 29.300 A13 13 0 1 0 44 38" fill="none" stroke="#fff" stroke-width="5.300"/>
<rect x="24" y="27.200" width="26.100" height="4.200" fill="#fff"/>
</svg>
<!-- tab -->
<svg style="left:79px;top:6px" width="18" height="16" viewBox="0 0 18 16"><path d="M3 5 C6 0 15 1 16 6 C13 3 8 3 6 7 C8 10 12 9 15 8 C13 12 6 13 3 10 Z" fill="#1a63c7"/><path d="M2 10 C5 15 13 14 16 9 C13 12 6 13 2 10Z" fill="#f39a1e"/><circle cx="3.2" cy="7.2" r="1.5" fill="#1a63c7"/></svg>
<div class="t" style="left:100px;top:9px;font-size:12px;color:#333">剪力墙端部加强问题_广联达服务</div>
<div class="a" style="left:262px;top:2px;width:16px;height:26px;background:linear-gradient(90deg,rgba(255,255,255,0),#fff)"></div>
<svg style="left:283px;top:11px" width="10" height="10"><path d="M1 1 L9 9 M9 1 L1 9" stroke="#333" stroke-width="1.3" fill="none"/></svg>
<svg style="left:312px;top:9px" width="14" height="14"><path d="M7 0 V14 M0 7 H14" stroke="#444" stroke-width="1.2"/></svg>
<!-- badge 74 -->
<div class="a" style="left:1169px;top:-25px;width:50px;height:50px;border-radius:50%;background:#c9c9c9;box-shadow:0 1px 3px rgba(0,0,0,.35)"></div>
<div class="a" style="left:1172px;top:-23px;width:44px;height:45px;border-radius:50%;background:#3fc154"></div>
<div class="t" style="left:1186px;top:0px;font-size:11px;font-weight:bold;color:#fff">74</div>
<!-- window controls -->
<svg style="left:1230px;top:8px" width="16" height="14"><path d="M1.5 3.5 L5 1 Q8 3 11 1 L14.5 3.5 L12.5 6 L11.5 5.2 V12.5 H4.5 V5.2 L3.5 6 Z" fill="none" stroke="#333" stroke-width="1.2"/></svg>
<div class="a" style="left:1269px;top:16px;width:12px;height:1.4px;background:#222"></div>
<svg style="left:1305px;top:10px" width="12" height="12"><path d="M.7 3.2 H8.3 V10.8 H.7Z M3 3 V.8 H10.8 V8.5 H8.5" fill="none" stroke="#222" stroke-width="1.2"/></svg>
<svg style="left:1342px;top:10px" width="12" height="12"><path d="M1 1 L11 11 M11 1 L1 11" stroke="#222" stroke-width="1.3"/></svg>
<!-- nav icons -->
<svg style="left:75px;top:40px" width="12" height="19"><path d="M10 1 L1.5 9.5 L10 18" fill="none" stroke="#bdbdbd" stroke-width="1.2"/></svg>
<svg style="left:110px;top:40px" width="12" height="19"><path d="M2 1 L10.5 9.5 L2 18" fill="none" stroke="#bdbdbd" stroke-width="1.2"/></svg>
<svg style="left:141px;top:39px" width="22" height="22"><path d="M11 2 A9.100 9.100 0 1 1 4.600 4.700" fill="none" stroke="#333" stroke-width="1.300"/><path d="M6.300 2.600 H11.300 V7.200" fill="none" stroke="#333" stroke-width="1.300"/></svg>
<svg style="left:178px;top:40px" width="22" height="20"><path d="M1.5 10 L11 1.2 L20.5 10 M4.5 8 V18.3 H17.5 V8" fill="none" stroke="#333" stroke-width="1.3"/></svg>
<div class="a" style="left:217px;top:40px;width:1px;height:20px;background:#e0e0e0"></div>
<svg style="left:226px;top:42px" width="15" height="15"><circle cx="7.5" cy="7.5" r="6.2" fill="#6db7f5"/><path d="M7.5 0 L9 3 L12.8 2.2 L12 6 L15 7.5 L12 9 L12.8 12.8 L9 12 L7.5 15 L6 12 L2.2 12.8 L3 9 L0 7.5 L3 6 L2.2 2.2 L6 3Z" fill="#6db7f5"/><circle cx="7.5" cy="7.5" r="4" fill="#eaf5ff"/></svg>
<div class="t" id="url" style="left:247px;top:41px;font-size:16px;color:#777;letter-spacing:0.37px">http://e.<span style="color:#111">fwxgx.com</span>/question/question_show?question_id=1792102</div>
<div class="a" style="left:876px;top:40px;width:79px;height:20px;background:#5dd88b;border:1px solid #46c877;border-radius:1px"></div>
<svg style="left:886px;top:44px" width="12" height="12"><path d="M7 1 H11 V5 M11 1 L7 5 M5 11 H1 V7 M1 11 L5 7" fill="none" stroke="#fff" stroke-width="1.1"/></svg>
<div class="t" style="left:904px;top:43px;font-size:14px;color:#fff;letter-spacing:-0.6px">3张大图</div>
<svg style="left:966px;top:43px" width="14" height="14"><path d="M11 2.5 L3 7 L11 11.5" fill="none" stroke="#777" stroke-width="1.3"/><circle cx="11" cy="2.5" r="2.1" fill="#777"/><circle cx="3" cy="7" r="2.1" fill="#777"/><circle cx="11" cy="11.5" r="2.1" fill="#777"/></svg>
<svg style="left:990px;top:43px" width="11" height="15"><path d="M7 0 L1 8 H5 L3.5 15 L10 6 H6 Z" fill="#3dc462"/></svg>
<svg style="left:1011px;top:46px" width="13" height="8"><path d="M1 1 L6.5 6.5 L12 1" fill="none" stroke="#999" stroke-width="1.1"/></svg>
<div class="a" style="left:1037px;top:40px;width:1px;height:20px;background:#ddd"></div>
<div class="t" style="left:1050px;top:42px;font-size:14px;color:#444">钱学森临终前七个字</div>
<svg style="left:1217px;top:43px" width="15" height="15"><circle cx="6" cy="6" r="5" fill="none" stroke="#999" stroke-width="1.2"/><path d="M9.7 9.7 L14 14" stroke="#999" stroke-width="1.3"/></svg>
<div class="a" style="left:1243px;top:40px;width:1px;height:20px;background:#ddd"></div>
<svg style="left:1263px;top:42px" width="13" height="17"><rect x=".7" y=".7" width="11.3" height="15.3" rx="1" fill="none" stroke="#444" stroke-width="1.3"/><rect x=".7" y="12.8" width="11.3" height="3.2" fill="#444"/><rect x="5" y="14" width="3" height="1" fill="#fff"/></svg>
<svg style="left:1294px;top:41px" width="18" height="17"><path d="M1 5 H10 A5 5 0 0 1 10 15.5 H6" fill="none" stroke="#333" stroke-width="1.4"/><path d="M5.5 1 L1.3 5 L5.5 9" fill="none" stroke="#333" stroke-width="1.4"/></svg>
<svg style="left:1317px;top:49px" width="6" height="4"><path d="M0 0 H6 L3 3.5Z" fill="#888"/></svg>
<svg style="left:1337px;top:43px" width="17" height="14"><path d="M0 1 H17 M0 7 H17 M0 13 H17" stroke="#333" stroke-width="1.4"/></svg>
<!-- bookmarks -->
<svg style="left:15px;top:77px" width="12" height="13"><path d="M7 1 L1.5 6.5 L7 12 M10 1 V12" fill="none" stroke="#555" stroke-width="1.2"/></svg>
<svg style="left:45px;top:76px" width="17" height="16"><path d="M7.5 .8 L9.6 5.6 L14.6 6 L10.8 9.4 L12 14.4 L7.5 11.7 L3 14.4 L4.2 9.4 L.4 6 L5.4 5.6Z" fill="#ffd964" stroke="#f3b73a" stroke-width=".9"/><circle cx="12.8" cy="12" r="3" fill="#52c26a"/><path d="M12.8 10.2 V13.8 M11 12 H14.6" stroke="#fff" stroke-width="1"/></svg>
<div class="t bmt" style="left:63px;font-size:12px">收藏</div>
<svg style="left:94px;top:81px" width="8" height="5"><path d="M.5 .5 L4 4 L7.5 .5" fill="none" stroke="#888" stroke-width="1"/></svg>
<svg style="left:112px;top:77px" width="10" height="14"><rect x=".7" y=".7" width="8.6" height="12.6" rx="1" fill="#fff" stroke="#46c068" stroke-width="1.4"/><rect x=".7" y="10.8" width="8.6" height="2.5" fill="#46c068"/></svg>
<div class="t bmt" style="left:124px;font-size:12px">手机收藏夹</div>
<svg style="left:194px;top:78px" width="10" height="13"><path d="M.6 .6 H6.2 L9.4 3.8 V12.4 H.6Z M6.2 .6 V3.8 H9.4" fill="#fff" stroke="#999" stroke-width="1"/></svg>
<div class="t bmt" style="left:209px;font-size:12px">谷歌</div>
<svg style="left:243px;top:76px" width="16" height="16"><circle cx="8" cy="8" r="7.6" fill="#f5dc1e"/><path d="M1 11 A7.6 7.6 0 0 0 15 11 A8 6 0 0 1 1 11Z" fill="#4aa72c"/><path d="M8 4 V12 M4 8 H12" stroke="#1c7d1c" stroke-width="2.4"/></svg>
<div class="t bmt" style="left:261px;font-size:12px">网址大全</div>
<svg style="left:319px;top:76px" width="16" height="16"><circle cx="8" cy="8" r="7.8" fill="#c3162c"/><path d="M7 5 H4.5 Q3 5 3 6.5 V9.5 Q3 11 4.5 11 H7 M12.5 5 H10 Q8.8 5 8.8 6.5 V9.5 Q8.8 11 10 11 H12.5 V8 H10.8" fill="none" stroke="#fff" stroke-width="1.5"/></svg>
<div class="t bmt" style="left:337px;font-size:12px">游戏中心</div>
<svg style="left:395px;top:77px" width="16" height="14"><path d="M.6 1.6 Q.6 .6 1.6 .6 H6 L7.6 2.6 H14.4 Q15.4 2.6 15.4 3.6 V12.4 Q15.4 13.4 14.4 13.4 H1.6 Q.6 13.4 .6 12.4Z" fill="#ffe487" stroke="#f0b429" stroke-width="1"/></svg><div class="t bmt" style="left:413px;font-size:12px">Links</div><svg style="left:452px;top:77px" width="16" height="14"><path d="M.6 1.6 Q.6 .6 1.6 .6 H6 L7.6 2.6 H14.4 Q15.4 2.6 15.4 3.6 V12.4 Q15.4 13.4 14.4 13.4 H1.6 Q.6 13.4 .6 12.4Z" fill="#ffe487" stroke="#f0b429" stroke-width="1"/></svg><div class="t bmt" style="left:470px;font-size:12px">Microsof</div><svg style="left:533px;top:77px" width="16" height="14"><path d="M.6 1.6 Q.6 .6 1.6 .6 H6 L7.6 2.6 H14.4 Q15.4 2.6 15.4 3.6 V12.4 Q15.4 13.4 14.4 13.4 H1.6 Q.6 13.4 .6 12.4Z" fill="#ffe487" stroke="#f0b429" stroke-width="1"/></svg><div class="t bmt" style="left:551px;font-size:12px">MSN 网</div><svg style="left:611px;top:77px" width="16" height="14"><path d="M.6 1.6 Q.6 .6 1.6 .6 H6 L7.6 2.6 H14.4 Q15.4 2.6 15.4 3.6 V12.4 Q15.4 13.4 14.4 13.4 H1.6 Q.6 13.4 .6 12.4Z" fill="#ffe487" stroke="#f0b429" stroke-width="1"/></svg><div class="t bmt" style="left:629px;font-size:12px">Window</div><svg style="left:691px;top:76px" width="18" height="16"><path d="M16 1 C17 10 12 15 3 14.5 C.5 14 0 11 2.5 8 C6 4 12 5 16 1Z" fill="#b7cf2e"/><path d="M2 13.5 C6 12 12 9 15.5 3 C14 10 9 14 2 13.5Z" fill="#5a9b2b"/></svg><div class="t bmt" style="left:709px;font-size:12px">品牌打折</div>
<svg style="left:767px;top:76px" width="16" height="16"><rect x=".5" y=".5" width="15" height="14" rx="3" fill="#ff5a1f"/><path d="M5 14 L3.5 16 L8 14Z" fill="#ff5a1f"/><text x="8" y="11.5" font-size="10" font-weight="bold" fill="#fff" text-anchor="middle" font-family="Liberation Sans,Noto Sans CJK SC,sans-serif">淘</text></svg>
<div class="t bmt" style="left:785px;font-size:12px">淘宝团购</div>
<svg style="left:844px;top:76px" width="14" height="16"><path d="M.5 .5 H13.5 V15.5 L10 12 V4 H4 V12 L.5 15.5Z" fill="#c1121c"/></svg>
<div class="t bmt" style="left:861px;font-size:12px">外国网友</div>
<svg style="left:924px;top:76px" width="18" height="16"><path d="M16 1 C17 10 12 15 3 14.5 C.5 14 0 11 2.5 8 C6 4 12 5 16 1Z" fill="#b7cf2e"/><path d="M2 13.5 C6 12 12 9 15.5 3 C14 10 9 14 2 13.5Z" fill="#5a9b2b"/></svg><div class="t bmt" style="left:942px;font-size:12px">天猫商城</div>
<svg style="left:1000px;top:76px" width="17" height="16"><ellipse cx="8.5" cy="7.5" rx="8" ry="7" fill="#4fc031"/><path d="M3 12 L2 16 L7 13.8Z" fill="#4fc031"/><circle cx="5.8" cy="6.3" r="1.2" fill="#fff"/><circle cx="11.2" cy="6.3" r="1.2" fill="#fff"/></svg>
<div class="t bmt" style="left:1018px;font-size:12px">精准控制</div>
<svg style="left:1085px;top:80px" width="9" height="8"><path d="M.5 .5 L4 4 L.5 7.5 M4.5 .5 L8 4 L4.5 7.5" fill="none" stroke="#888" stroke-width="1"/></svg>
<svg style="left:1180px;top:74px" width="18" height="19"><path d="M9 .5 L17 3 V9 Q17 15.5 9 18.5 Q1 15.5 1 9 V3Z" fill="#3cc463"/><path d="M6 5 L9 9 L12 5 M9 9 V14 M6 9.5 H12 M6 11.8 H12" stroke="#fff" stroke-width="1.1" fill="none"/></svg>
<svg style="left:1204px;top:82px" width="7" height="4"><path d="M0 0 H7 L3.5 4Z" fill="#777"/></svg>
<svg style="left:1219px;top:74px" width="20" height="20"><rect x=".5" y=".5" width="14" height="14" rx="2" fill="#3cc463"/><text x="7.5" y="12" font-size="12" fill="#fff" text-anchor="middle" font-family="Liberation Sans,sans-serif">A</text><path d="M10 10.5 H18 V14.5 H10Z M14 8 V19" fill="none" stroke="#3cc463" stroke-width="1.6"/></svg>
<svg style="left:1244px;top:82px" width="7" height="4"><path d="M0 0 H7 L3.5 4Z" fill="#777"/></svg>
<svg style="left:1260px;top:74px" width="17" height="18"><path d="M2 1 L11.5 13 M15 1 L5.5 13" stroke="#f2514f" stroke-width="2.4" fill="none"/><circle cx="4" cy="14.5" r="2.3" fill="none" stroke="#f2514f" stroke-width="1.6"/><circle cx="13" cy="14.5" r="2.3" fill="none" stroke="#f2514f" stroke-width="1.6"/></svg>
<svg style="left:1284px;top:82px" width="7" height="4"><path d="M0 0 H7 L3.5 4Z" fill="#777"/></svg>
<svg style="left:1299px;top:74px" width="19" height="18"><circle cx="11.5" cy="6.5" r="4.8" fill="none" stroke="#2f7ff0" stroke-width="2.6"/><path d="M8 10 L1.5 16.5 M4 14 L6 16" stroke="#2f7ff0" stroke-width="2.4" fill="none"/></svg>
<svg style="left:1337px;top:76px" width="16" height="16"><path d="M.7 1.7 H5.7 V7 H.7Z M.7 9.7 H5.7 V15 H.7Z M9 9.7 H14 V15 H9Z" fill="none" stroke="#444" stroke-width="1.2"/><path d="M11.5 .8 L12.3 3 L14.6 3.8 L12.3 4.6 L11.5 6.8 L10.7 4.6 L8.4 3.8 L10.7 3Z" fill="none" stroke="#444" stroke-width="1.1"/></svg>


<!-- STATUS BAR -->
<svg style="left:10px;top:708px" width="16" height="16"><path d="M1.5 5 H14.5 V8 H1.5Z M2.7 8 V15 H13.3 V8 M8 5 V15 M8 5 C5 5 3.5 3.5 4.5 2 C6 .6 7.5 3 8 5 C8.5 3 10 .6 11.5 2 C12.5 3.5 11 5 8 5" fill="none" stroke="#f6a98a" stroke-width="1.1"/></svg>
<div class="t" style="left:31px;top:710px;font-size:12px;color:#444">今日优选</div>
<svg style="left:838px;top:708px" width="15" height="15"><rect x=".7" y=".7" width="13.6" height="13.6" rx="1.5" fill="none" stroke="#2fbf5b" stroke-width="1.2"/><path d="M4.5 3.5 L10.5 7.5 L4.5 11.5Z" fill="#2fbf5b"/></svg>
<div class="t" style="left:859px;top:710px;font-size:12px;color:#666">快剪辑</div>
<svg style="left:906px;top:708px" width="16" height="16"><circle cx="8" cy="8" r="7" fill="none" stroke="#2fbf5b" stroke-width="1.2"/><path d="M6.3 5 L10.8 8 L6.3 11Z" fill="none" stroke="#2fbf5b" stroke-width="1.1"/></svg>
<div class="t" style="left:928px;top:710px;font-size:12px;color:#666">今日直播</div>
<svg style="left:988px;top:708px" width="16" height="16"><rect x=".7" y="1.7" width="14" height="12.6" rx="1.5" fill="none" stroke="#2fbf5b" stroke-width="1.2"/><path d="M4 5 H7.5 V8.5 H4Z M9.5 5.5 H12 M9.5 8 H12 M4 11 H12" fill="none" stroke="#2fbf5b" stroke-width="1.1"/></svg>
<div class="t" style="left:1008px;top:710px;font-size:12px;color:#666">热点资讯</div>
<svg style="left:1073px;top:708px" width="16" height="16"><path d="M2.5 12.5 A6.3 6.3 0 1 1 6 14.2" fill="none" stroke="#8a8a8a" stroke-width="1.1"/><path d="M8 5 V11 M5 8 H11 M13.5 2 L1.5 14" stroke="#8a8a8a" stroke-width="1.1" fill="none"/></svg>
<svg style="left:1108px;top:708px" width="16" height="16"><path d="M14.5 1.5 C10 1.5 6.5 4 5 8 L8 11 C12 9.5 14.5 6 14.5 1.5Z M5 8 L2 8.5 L4.5 5.5 M8 11 L7.5 14 L10.5 11.5 M4.5 11.5 L1.5 14.5" fill="none" stroke="#8a8a8a" stroke-width="1.1"/></svg>
<svg style="left:1144px;top:709px" width="12" height="14"><path d="M6 0 V12.5 M.8 7.5 L6 12.8 L11.2 7.5" fill="none" stroke="#8a8a8a" stroke-width="1.2"/></svg>
<div class="t" style="left:1163px;top:710px;font-size:12px;color:#888">下载</div>
<svg style="left:1201px;top:708px" width="16" height="16"><path d="M13.5 9 H4 A4.7 4.7 0 1 1 12.8 11" fill="none" stroke="#9a9a9a" stroke-width="1.1"/><path d="M14.5 1 C9 .5 2 8 1.5 14.5" fill="none" stroke="#9a9a9a" stroke-width="1"/></svg>
<svg style="left:1240px;top:709px" width="13" height="13"><path d="M.7 3.7 H9.3 V12.3 H.7Z M3 3.5 V.7 H12.3 V10 H9.5" fill="none" stroke="#9a9a9a" stroke-width="1.2"/></svg>
<svg style="left:1276px;top:708px" width="16" height="16"><path d="M1 5.5 H4 L8 2 V14 L4 10.5 H1Z" fill="none" stroke="#9a9a9a" stroke-width="1.1"/><path d="M10.5 5.5 Q12 8 10.5 10.5 M12.5 3.5 Q15.2 8 12.5 12.5" fill="none" stroke="#9a9a9a" stroke-width="1.1"/></svg>
<svg style="left:1309px;top:709px" width="13" height="13"><circle cx="5.3" cy="5.3" r="4.4" fill="none" stroke="#8a8a8a" stroke-width="1.2"/><path d="M8.6 8.6 L12.3 12.3" stroke="#8a8a8a" stroke-width="1.3"/></svg>
<div class="t" style="left:1329px;top:710px;font-size:12.5px;color:#777">105%</div>
<!-- TASKBAR -->
<div class="a" style="left:0;top:728px;width:48px;height:40px;background:#000"></div>
<svg style="left:16px;top:740px" width="17" height="17"><path d="M0 2.4 L7 1.4 V8 H0Z M8 1.25 L17 0 V8 H8Z M0 9 H7 V15.6 L0 14.6Z M8 9 H17 V17 L8 15.75Z" fill="#fff"/></svg>
<div class="a" style="left:48px;top:728px;width:344px;height:40px;background:#343434"></div>
<div class="a" style="left:58px;top:738px;width:20px;height:20px;border-radius:50%;border:2.6px solid #f2f2f2;box-shadow:0 0 1px #fff"></div>
<div class="t" style="left:84px;top:741px;font-size:14px;color:#a3a3a3">在这里输入你要搜索的内容</div>
<svg style="left:366px;top:739px" width="11" height="18"><rect x="2.5" y=".6" width="6" height="10.5" rx="3" fill="none" stroke="#9a9a9a" stroke-width="1.1"/><path d="M.6 8 Q.6 13.5 5.5 13.5 Q10.4 13.5 10.4 8 M5.5 13.5 V17 M3 17 H8" fill="none" stroke="#9a9a9a" stroke-width="1.1"/></svg>
<!-- task view -->
<svg style="left:405px;top:740px" width="22" height="16"><rect x="5" y="1" width="12" height="14" fill="none" stroke="#fff" stroke-width="1.3"/><path d="M3 3 H1 V13 H3 M19 3 H21 V13 H19" fill="none" stroke="#fff" stroke-width="1.2"/></svg>
<!-- pinwheel -->
<svg style="left:454px;top:736px" width="24" height="24" viewBox="-12 -12 24 24"><g fill="#e6e6e6" transform="rotate(12)"><rect x="-11" y="-11" width="10.300" height="10.300" rx="4.600"/><rect x=".7" y="-11" width="10.300" height="10.300" rx="4.600"/><rect x="-11" y=".7" width="10.300" height="10.300" rx="4.600"/><rect x=".7" y=".7" width="10.300" height="10.300" rx="4.600"/><circle r="3"/></g><g fill="none" stroke="#0a1318" stroke-width="1.300" transform="rotate(12)"><path d="M-3 -3 Q-8 -4 -8 -8 M3 -3 Q4 -8 8 -8 M3 3 Q8 4 8 8 M-3 3 Q-4 8 -8 8"/></g></svg>
<!-- white e -->
<svg style="left:506px;top:736px" width="25" height="24"><path d="M19.5 14 H8.5 A5.2 5.2 0 0 0 18 16.5 L21 18 A9 9 0 1 1 22 12.5 V14Z M8.6 10.8 H18 A4.8 4.8 0 0 0 8.6 10.8Z" fill="#f0f0f0" fill-rule="evenodd"/><path d="M21.5 2 C15 0 3 10 3.5 22" fill="none" stroke="#f0f0f0" stroke-width="1.2"/></svg>
<!-- swirl -->
<svg style="left:557px;top:737px" width="22" height="22"><path d="M19 5 C14 0 4 2 2.5 10 C1.5 17 9 21 15 18.5 C20 16 20 9.5 15 8 C11 7 8 10 9 13 C10 15.5 13 15 13.5 13" fill="none" stroke="#e0e0e0" stroke-width="1.7"/></svg>
<!-- edge -->
<svg style="left:607px;top:737px" width="22" height="22"><path d="M1 10 C2 3 7 .5 11.5 .5 C18 .5 21.5 5.5 21 13 H7.5 C8 17 12 19 19 16.5 V20.5 C10 23.5 2.5 20 2.5 13 C2.5 9.5 5 6.5 8.5 5.5 C4.5 6 2 8 1 10Z M7.6 9.3 H15 C15 6 12.5 4.8 11 4.8 C9 4.8 7.8 6.8 7.6 9.3Z" fill="#0d7be0" fill-rule="evenodd"/></svg>
<!-- IE -->
<svg style="left:648px;top:735px" width="27" height="26"><path d="M21.5 16 H9.5 A5.3 5.3 0 0 0 19 18.3 L23 19.5 A9.6 9.6 0 1 1 24 14 V16Z M9.6 12.3 H19.5 A5 5 0 0 0 9.6 12.3Z" fill="#2c9ae8" fill-rule="evenodd"/><path d="M24.5 3 C20 -2 3 9 2.5 21 C2.5 25 6 25.5 9 23.5" fill="none" stroke="#f3c430" stroke-width="2"/></svg>
<!-- folder -->
<svg style="left:692px;top:737px" width="24" height="22"><path d="M1 3 H9 L11 5.5 H23 V20 H1Z" fill="#f7c948"/><path d="M1 7 H23 V20 H1Z" fill="#ffe38a"/><path d="M6.5 13 H17.5 V20 H14 V16.5 H10 V20 H6.5Z" fill="#2a8fe0"/></svg>
<!-- sogou browser -->
<svg style="left:734px;top:735px" width="26" height="26"><path d="M22 7 C18 0 5 1 2.5 11 C.5 20 9 26 17.5 22.5 C24 19.5 23.5 11 17.5 10 C13.5 9.5 11 12.5 12 15.5 C13 18 16.5 17 16.5 15 C19 17.5 15.5 21.5 11.5 19.5 C5.5 16.5 8.5 6.5 16 6.5 C19 6.5 20.5 7.5 22 7Z" fill="#2a9df4"/><path d="M14 3 C18 1.5 22 2 24.5 .5 C24 4 21 6.5 18 6Z" fill="#2a9df4"/></svg>
<div class="a" style="left:730px;top:766px;width:34px;height:2px;background:#76b9ed"></div>
<!-- 360 active -->
<div class="a" style="left:769px;top:728px;width:41px;height:40px;background:#33393d"></div>
<svg style="left:775px;top:735px" width="27" height="26"><circle cx="13" cy="13.5" r="11.5" fill="#4bc42f"/><path d="M20 15 H9.5 A4.8 4.8 0 0 0 18 17.5 L21 18.8 A8.3 8.3 0 1 1 21.5 12.5 V15Z M9.6 11.8 H17.8 A4.3 4.3 0 0 0 9.6 11.8Z" fill="#fff" fill-rule="evenodd"/><path d="M25 2 C20 1 6 8 1.5 22" fill="none" stroke="#eaffea" stroke-width="1.4"/></svg>
<div class="a" style="left:769px;top:766px;width:41px;height:2px;background:#76b9ed"></div>
<!-- GGJ -->
<div class="a" style="left:819px;top:736px;width:24px;height:24px;border-radius:5px;background:linear-gradient(180deg,#2aa3f5,#1187e6)"></div>
<svg style="left:823px;top:740px" width="16" height="16"><path d="M8 1.5 V14 M8 14 Q8 15.5 6.5 15 M2 6 Q.5 8 2 10 H14 Q15.5 8 14 6 M8 1.5 Q5.5 1 5.5 3 Q5.5 4.5 8 4.5 Q10.5 4.5 10.5 3 Q10.500 1 8 1.500" fill="none" stroke="#fff" stroke-width="1.6"/></svg>
<div class="a" style="left:815px;top:766px;width:33px;height:2px;background:#76b9ed"></div>
<!-- notepad -->
<div class="a" style="left:861px;top:736px;width:24px;height:24px;border-radius:2px;background:linear-gradient(135deg,#f9b233,#f07d12);border:1px solid #f6c04a"></div>
<svg style="left:863px;top:738px" width="20" height="20"><path d="M2 6 L13 3 L16 15 L5 18Z" fill="#f4f0e6"/><path d="M5 8 L12 6 M5.500 10.500 L12.500 8.500 M6 13 L13 11 M6.500 15.500 L11 14.200" stroke="#999" stroke-width=".9"/><path d="M19 1 L11 14 L10 17 L12.500 15 L20 2.500Z" fill="#e8642a"/></svg>
<div class="a" style="left:857px;top:766px;width:33px;height:2px;background:#76b9ed"></div>
<!-- CAD -->
<div class="a" style="left:903px;top:736px;width:24px;height:24px;border-radius:2px;background:linear-gradient(180deg,#2f7fd6,#1b55ac);border:1.500px solid #8fa2b8"></div>
<div class="t" style="left:906px;top:743px;font-size:10px;color:#d8e6fa;font-weight:bold;letter-spacing:-.5px;transform:scaleY(1.200)">CAD</div>
<div class="a" style="left:899px;top:766px;width:33px;height:2px;background:#76b9ed"></div>
<div class="t" style="left:949px;top:742px;font-size:12px;color:#fff">链接</div>
<div class="t" style="left:1004px;top:733px;font-size:12px;color:#fff">12%</div>
<div class="t" style="left:992px;top:750px;font-size:12px;color:#fff">CPU使用</div>
<svg style="left:1059px;top:744px" width="14" height="8"><path d="M1 7 L7 1 L13 7" fill="none" stroke="#fff" stroke-width="1.3"/></svg>
<svg style="left:1081px;top:741px" width="18" height="13"><rect x="5" y="2.600" width="11" height="8" fill="none" stroke="#fff" stroke-width="1.100"/><rect x="6.500" y="4" width="6" height="5.200" fill="#fff"/><rect x="16.500" y="5" width="1.200" height="3.500" fill="#fff"/><path d="M0 2 H2 M0 5 H2 M2 .8 V6.200 Q4.500 6 4.500 3.500 Q4.500 1 2 .8Z M4.500 3.500 H6 M3 6 Q3 9 5 9" fill="#fff" stroke="#fff" stroke-width=".9"/></svg>
<svg style="left:1108px;top:741px" width="15" height="14"><path d="M1 13 A12 12 0 0 1 13 1 M4.500 13 A8.500 8.500 0 0 1 13 4.500 M8 13 A5 5 0 0 1 13 8" fill="none" stroke="#cfcfcf" stroke-width="1.300"/><circle cx="12" cy="12" r="1.600" fill="#fff"/></svg>
<svg style="left:1130px;top:740px" width="17" height="15"><path d="M1 5 H4 L8 1.500 V13.500 L4 10 H1Z" fill="none" stroke="#fff" stroke-width="1.100"/><path d="M10 5 Q11.500 7.500 10 10 M12 3.500 Q14.500 7.500 12 11.500" fill="none" stroke="#fff" stroke-width="1"/><path d="M14.200 1.500 Q17.500 7.500 14.200 13.500" fill="none" stroke="#777" stroke-width="1"/></svg>
<svg style="left:1154px;top:741px" width="24" height="14"><rect x=".6" y=".6" width="22.800" height="12.800" rx="1" fill="none" stroke="#fff" stroke-width="1.100"/><path d="M3 4 H21 M3 6.800 H21" stroke="#fff" stroke-width="1.300" stroke-dasharray="1.400 1.200"/><path d="M5.500 10 H18.500" stroke="#fff" stroke-width="1.200"/></svg>
<div class="t" style="left:1187px;top:741px;font-size:13px;color:#fff">中</div>
<svg style="left:1213px;top:739px" width="18" height="18"><path d="M2 3 L15 .5 Q17 .5 17.300 2.500 L17.500 13 Q17.500 15 15.500 15.500 L4 17.500 Q2 17.500 1.500 15.500 L.5 5 Q.5 3.300 2 3Z" fill="#f4511e"/><path d="M13.500 5 Q9 3 6 5.500 Q4.500 8 9 9 Q13 10 11.500 12 Q9 14 4.500 12" fill="none" stroke="#fff" stroke-width="2.200"/></svg>
<div class="a" style="left:1297px;top:728px;width:69px;height:40px;background:#000"></div>
<div class="t" style="left:1261px;top:731.500px;font-size:13px;color:#fff">21:50</div>
<div class="t" style="left:1247px;top:750.500px;font-size:13px;color:#fff">2018/5/12</div>
<svg style="left:1324px;top:740px" width="19" height="17"><path d="M.7 .7 H17.300 V12.300 H11 L9 14.800 L7 12.300 H.7Z" fill="none" stroke="#fff" stroke-width="1.300"/></svg>
<div class="a" style="left:1361px;top:728px;width:1px;height:40px;background:#4a4a4a"></div>

<!--CHROME3-->
</body>
</html>
